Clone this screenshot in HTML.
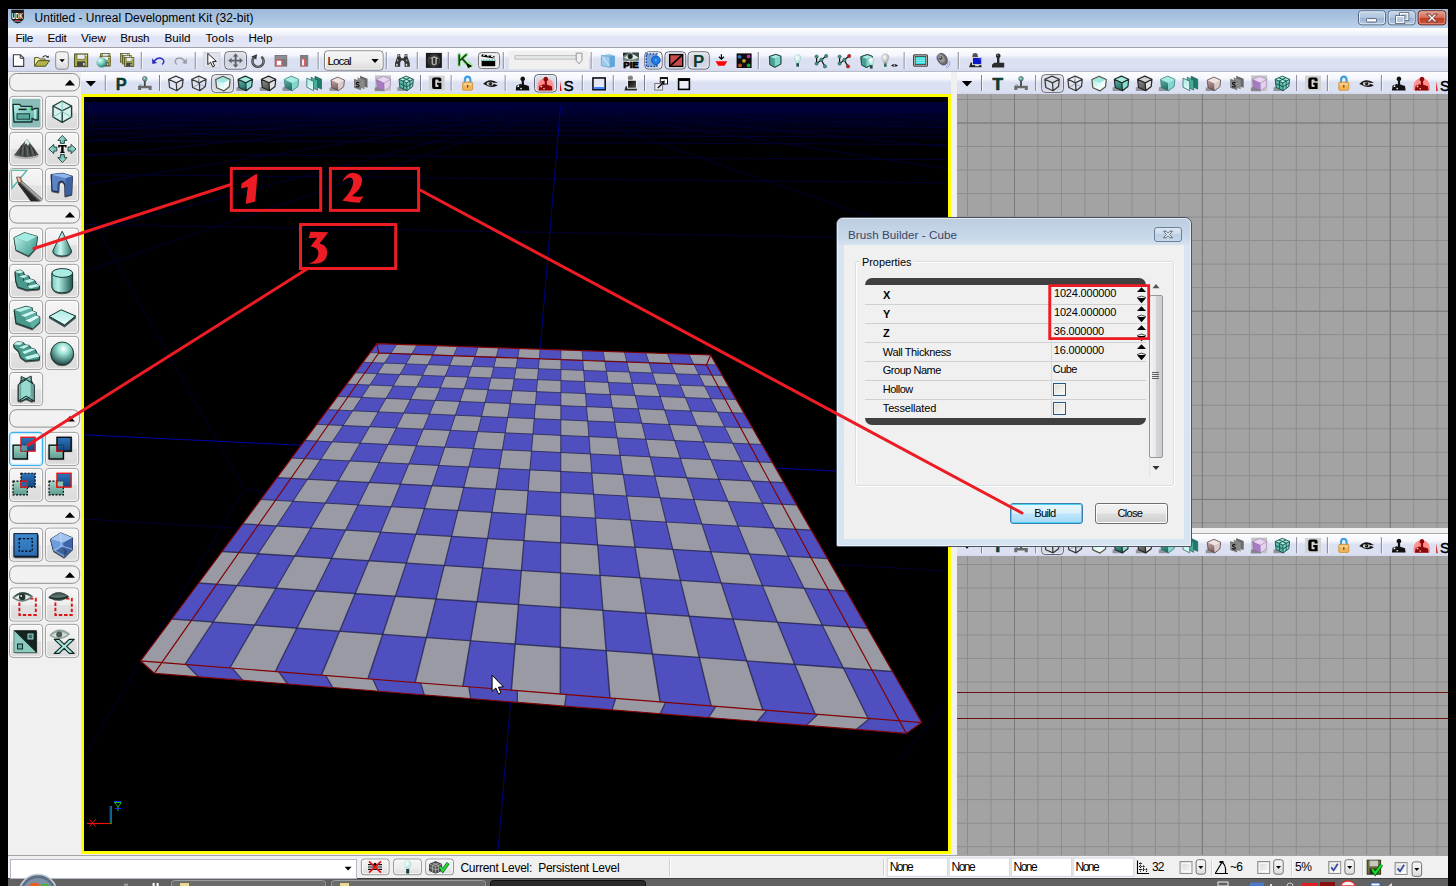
<!DOCTYPE html><html><head><meta charset="utf-8"><title>UDK</title><style>
*{box-sizing:border-box;margin:0;padding:0}
html,body{width:1456px;height:886px;overflow:hidden;background:#000}
body{position:relative;font-family:"Liberation Sans",sans-serif;font-size:12px;color:#000}
.a{position:absolute}
.t{position:absolute;white-space:nowrap;line-height:1}
.sep{position:absolute;width:1px;background:#8d8d9a;height:18px}
.tb{position:absolute;left:8px;width:1440px;background:linear-gradient(#fefeff 0%,#f4f6fc 32%,#dbe0f2 48%,#dce1f2 85%,#d4d9ee 100%)}
.lb{position:absolute;width:33px;height:33px;border:1px solid #a9a9a9;border-radius:3px;background:linear-gradient(#f6f6f6 0%,#efefef 50%,#dcdcdc 100%)}
.hd{position:absolute;left:10px;width:70px;height:17px;border:1px solid #9a9a9a;border-radius:7px;background:#f0f0f0}
.hd:after{content:"";position:absolute;right:5px;top:5px;border:5px solid transparent;border-top:0;border-bottom:6px solid #000}
.sel{position:absolute;border:1px solid #6a6a72;border-radius:3px;background:linear-gradient(#e4e6ee,#cfd2de)}
</style></head><body>
<div class="a" style="left:8px;top:9px;width:1440px;height:869px;background:#f0f0f0"></div>
<div class="a" style="left:8px;top:9px;width:1440px;height:19px;background:linear-gradient(#9db9d9 0%,#a9c3e0 45%,#bcd2ea 100%)"></div>
<div class="tb" style="top:28px;height:19px;background:linear-gradient(#ffffff 0%,#f1f3fb 30%,#dfe3f4 50%,#e3e7f6 100%)"></div>
<div class="a" style="left:8px;top:47px;width:1440px;height:1px;background:#a0a0a8"></div>
<div class="tb" style="top:48px;height:23px"></div>
<div class="a" style="left:8px;top:71px;width:1440px;height:1px;background:#b8bccb"></div>
<div class="tb" style="top:72px;height:22px"></div>
<div class="a" style="left:8px;top:72px;width:73px;height:784px;background:#f0f0f0"></div>
<div class="a" style="left:81px;top:94px;width:870px;height:760px;background:#ffff00"></div>
<div class="a" style="left:84px;top:97px;width:864px;height:754px;background:#000"></div>
<div class="a" style="left:951px;top:72px;width:6px;height:784px;background:#f0f0f0"></div>
<div class="a" style="left:957px;top:94px;width:491px;height:434px;background-color:#a3a3a3;background-image:linear-gradient(90deg,#7a7a7a 1px,transparent 1px),linear-gradient(#7a7a7a 1px,transparent 1px),linear-gradient(90deg,#8c8c8c 1px,transparent 1px),linear-gradient(#8c8c8c 1px,transparent 1px);background-size:187.92px 188.24px,187.92px 188.24px,23.49px 23.53px,23.49px 23.53px;background-position:56.98px 0,0 28.53px,10.00px 0,0 5.00px;"></div>
<div class="a" style="left:957px;top:528px;width:491px;height:6px;background:#f0f0f0;border-bottom:1px solid #a8a8a8"></div>
<div class="tb" style="left:957px;width:491px;top:534px;height:22px"></div>
<div class="a" style="left:957px;top:556px;width:491px;height:299px;background-color:#a3a3a3;background-image:linear-gradient(90deg,#7a7a7a 1px,transparent 1px),linear-gradient(#7a7a7a 1px,transparent 1px),linear-gradient(90deg,#8c8c8c 1px,transparent 1px),linear-gradient(#8c8c8c 1px,transparent 1px);background-size:187.92px 188.24px,187.92px 4000.00px,23.49px 23.53px,23.49px 23.53px;background-position:56.98px 0,0 3000.00px,10.00px 0,0 8.00px;"></div>
<div class="a" style="left:957px;top:692px;width:491px;height:1px;background:#6e1010"></div>
<div class="a" style="left:957px;top:718px;width:491px;height:1px;background:#6e1010"></div>
<div class="a" style="left:8px;top:855px;width:1440px;height:23px;background:#f0f0f0;border-top:1px solid #a5a5a5"></div>
<div class="a" style="left:8px;top:878px;width:1440px;height:8px;background:#616161;border-top:1px solid #3e3e3e"></div>
<svg class="a" style="left:0;top:0" width="1456" height="886" viewBox="0 0 1456 886">
<defs><clipPath id="vp"><rect x="84" y="97" width="864" height="754"/></clipPath><linearGradient id="hz" x1="0" y1="0" x2="0" y2="1"><stop offset="0" stop-color="#00002a"/><stop offset="0.4" stop-color="#000016"/><stop offset="1" stop-color="#000004"/></linearGradient></defs>
<g clip-path="url(#vp)"><rect x="84" y="102" width="864" height="12" fill="#000038"/><rect x="84" y="114" width="864" height="30" fill="url(#hz)"/>
<g clip-path="url(#vp)">
<path d="M84 113.0 L948 113.5" stroke="#000030" stroke-width="1"/>
<path d="M84 116.5 L948 117.5" stroke="#000030" stroke-width="1"/>
<path d="M84 120.5 L948 122.0" stroke="#000030" stroke-width="1"/>
<path d="M84 124.5 L948 126.5" stroke="#000030" stroke-width="1"/>
<path d="M84 129.0 L948 131.5" stroke="#000030" stroke-width="1"/>
<path d="M84 134.0 L948 137.2" stroke="#000030" stroke-width="1"/>
<path d="M84 140.5 L948 144.5" stroke="#000030" stroke-width="1"/>
<path d="M84 154.0 L948 159.7" stroke="#000030" stroke-width="1"/>
<path d="M84 174.5 L948 182.8" stroke="#000030" stroke-width="1"/>
<path d="M84 224.5 L948 239.2" stroke="#000030" stroke-width="1"/>
<path d="M84 519.0 L948 571.1" stroke="#000030" stroke-width="1"/>
<path d="M560 109 L84 122.0" stroke="#000030" stroke-width="1"/>
<path d="M560 109 L84 130.0" stroke="#000030" stroke-width="1"/>
<path d="M560 109 L84 141.0" stroke="#000030" stroke-width="1"/>
<path d="M560 109 L84 156.4" stroke="#000030" stroke-width="1"/>
<path d="M560 109 L84 184.6" stroke="#000030" stroke-width="1"/>
<path d="M560 109 L84 233.6" stroke="#000030" stroke-width="1"/>
<path d="M560 109 L84 272.0" stroke="#000030" stroke-width="1"/>
<path d="M560 109 L948 119.0" stroke="#000030" stroke-width="1"/>
<path d="M560 109 L948 128.0" stroke="#000030" stroke-width="1"/>
<path d="M560 109 L948 147.0" stroke="#000030" stroke-width="1"/>
<path d="M560 109 L948 169.0" stroke="#000030" stroke-width="1"/>
<path d="M560 109 L948 244.0" stroke="#000030" stroke-width="1"/>
<path d="M84 205 L244.300 488.900 L182 593 L84 757 M244.300 488.900 L290 495" stroke="#000030" stroke-width="1" fill="none"/>
<path d="M840 414 L948 560 M900 760 L948 700" stroke="#000030" stroke-width="1" fill="none"/>
<path d="M560.500 106 L498 851" stroke="#0000a0" stroke-width="1" opacity=".8"/>
<path d="M84 434.800 L836 471" stroke="#0000a8" stroke-width="1"/>
</g>
<polygon points="376.8,343.6 710.6,355.0 921.8,722.5 140.6,660.9" fill="#9a9aa5"/>
<path d="M376.8 343.6 396.8 344.3 390.8 353.4 370.1 352.6ZM417.0 345.0 437.2 345.7 432.7 354.8 411.7 354.1ZM457.6 346.4 478.0 347.1 474.9 356.3 453.7 355.6ZM498.6 347.8 519.3 348.5 517.7 357.8 496.3 357.1ZM540.1 349.2 561.0 349.9 561.0 359.4 539.3 358.6ZM582.0 350.6 603.1 351.3 604.7 360.9 582.8 360.1ZM624.4 352.1 645.8 352.8 649.0 362.5 626.8 361.7ZM667.3 353.5 688.9 354.3 693.7 364.1 671.3 363.3ZM390.8 353.4 411.7 354.1 406.0 363.9 384.4 363.1ZM432.7 354.8 453.7 355.6 449.6 365.5 427.8 364.7ZM474.9 356.3 496.3 357.1 493.8 367.1 471.6 366.3ZM517.7 357.8 539.3 358.6 538.4 368.8 516.0 367.9ZM561.0 359.4 582.8 360.1 583.6 370.4 560.9 369.6ZM604.7 360.9 626.8 361.7 629.3 372.1 606.4 371.3ZM649.0 362.5 671.3 363.3 675.6 373.8 652.4 372.9ZM693.7 364.1 716.3 364.9 722.4 375.5 698.9 374.7ZM362.9 362.3 384.4 363.1 377.4 373.6 355.1 372.8ZM406.0 363.9 427.8 364.7 422.5 375.3 399.9 374.5ZM449.6 365.5 471.6 366.3 468.1 377.1 445.2 376.2ZM493.8 367.1 516.0 367.9 514.2 378.8 491.1 378.0ZM538.4 368.8 560.9 369.6 560.9 380.6 537.5 379.7ZM583.6 370.4 606.4 371.3 608.2 382.4 584.5 381.5ZM629.3 372.1 652.4 372.9 656.1 384.3 632.1 383.3ZM675.6 373.8 698.9 374.7 704.6 386.1 680.2 385.2ZM377.4 373.6 399.9 374.5 393.2 385.9 369.9 385.0ZM422.5 375.3 445.2 376.2 440.4 387.8 416.7 386.9ZM468.1 377.1 491.1 378.0 488.1 389.7 464.2 388.8ZM514.2 378.8 537.5 379.7 536.5 391.6 512.2 390.7ZM560.9 380.6 584.5 381.5 585.5 393.6 560.9 392.6ZM608.2 382.4 632.1 383.3 635.1 395.5 610.2 394.5ZM656.1 384.3 680.2 385.2 685.3 397.5 660.1 396.5ZM704.6 386.1 729.0 387.0 736.2 399.6 710.7 398.5ZM346.7 384.1 369.9 385.0 361.7 397.4 337.5 396.4ZM393.2 385.9 416.7 386.9 410.5 399.4 386.0 398.4ZM440.4 387.8 464.2 388.8 460.0 401.4 435.2 400.4ZM488.1 389.7 512.2 390.7 510.1 403.5 485.0 402.5ZM536.5 391.6 560.9 392.6 560.9 405.6 535.4 404.6ZM585.5 393.6 610.2 394.5 612.3 407.7 586.5 406.7ZM635.1 395.5 660.1 396.5 664.5 409.9 638.3 408.8ZM685.3 397.5 710.7 398.5 717.3 412.1 690.8 411.0ZM361.7 397.4 386.0 398.4 378.2 411.9 352.8 410.8ZM410.5 399.4 435.2 400.4 429.5 414.1 403.7 413.0ZM460.0 401.4 485.0 402.5 481.5 416.4 455.4 415.3ZM510.1 403.5 535.4 404.6 534.2 418.7 507.8 417.5ZM560.9 405.6 586.5 406.7 587.7 421.0 560.8 419.8ZM612.3 407.7 638.3 408.8 641.9 423.3 614.7 422.1ZM664.5 409.9 690.8 411.0 696.9 425.7 669.3 424.5ZM717.3 412.1 744.0 413.2 752.6 428.1 724.6 426.9ZM327.6 409.7 352.8 410.8 343.1 425.5 316.7 424.3ZM378.2 411.9 403.7 413.0 396.3 427.9 369.6 426.7ZM429.5 414.1 455.4 415.3 450.4 430.4 423.3 429.2ZM481.5 416.4 507.8 417.5 505.2 432.9 477.7 431.6ZM534.2 418.7 560.8 419.8 560.8 435.4 532.9 434.1ZM587.7 421.0 614.7 422.1 617.3 437.9 588.9 436.7ZM641.9 423.3 669.3 424.5 674.5 440.5 645.8 439.2ZM696.9 425.7 724.6 426.9 732.6 443.2 703.5 441.8ZM343.1 425.5 369.6 426.7 360.2 443.0 332.4 441.7ZM396.3 427.9 423.3 429.2 416.4 445.7 388.2 444.3ZM450.4 430.4 477.7 431.6 473.5 448.4 444.9 447.0ZM505.2 432.9 532.9 434.1 531.5 451.1 502.4 449.8ZM560.8 435.4 588.9 436.7 590.3 453.9 560.8 452.5ZM617.3 437.9 645.8 439.2 650.1 456.8 620.1 455.3ZM674.5 440.5 703.5 441.8 710.8 459.6 680.3 458.2ZM732.6 443.2 762.0 444.5 772.4 462.6 741.5 461.1ZM304.8 440.4 332.4 441.7 320.6 459.5 291.6 458.0ZM360.2 443.0 388.2 444.3 379.2 462.4 349.8 460.9ZM416.4 445.7 444.9 447.0 438.8 465.4 408.9 463.9ZM473.5 448.4 502.4 449.8 499.3 468.4 468.9 466.9ZM531.5 451.1 560.8 452.5 560.7 471.5 529.9 469.9ZM590.3 453.9 620.1 455.3 623.2 474.6 591.9 473.0ZM650.1 456.8 680.3 458.2 686.7 477.8 654.8 476.2ZM710.8 459.6 741.5 461.1 751.3 481.0 718.9 479.4ZM320.6 459.5 349.8 460.9 338.2 480.9 307.5 479.2ZM379.2 462.4 408.9 463.9 400.5 484.1 369.2 482.5ZM438.8 465.4 468.9 466.9 463.8 487.5 432.0 485.8ZM499.3 468.4 529.9 469.9 528.1 490.9 495.8 489.2ZM560.7 471.5 591.9 473.0 593.6 494.3 560.7 492.6ZM623.2 474.6 654.8 476.2 660.2 497.8 626.7 496.1ZM686.7 477.8 718.9 479.4 727.9 501.4 693.9 499.6ZM751.3 481.0 784.0 482.6 796.8 505.0 762.2 503.2ZM277.0 477.6 307.5 479.2 292.9 501.2 260.8 499.5ZM338.2 480.9 369.2 482.5 358.1 504.9 325.4 503.1ZM400.5 484.1 432.0 485.8 424.4 508.6 391.1 506.7ZM463.8 487.5 495.8 489.2 491.9 512.3 458.0 510.4ZM528.1 490.9 560.7 492.6 560.7 516.2 526.1 514.2ZM593.6 494.3 626.7 496.1 630.6 520.1 595.5 518.1ZM660.2 497.8 693.9 499.6 701.9 524.0 666.1 522.0ZM727.9 501.4 762.2 503.2 774.5 528.1 738.0 526.1ZM292.9 501.2 325.4 503.1 311.0 528.0 276.6 525.9ZM358.1 504.9 391.1 506.7 380.6 532.1 345.6 530.0ZM424.4 508.6 458.0 510.4 451.6 536.3 415.9 534.2ZM491.9 512.3 526.1 514.2 523.9 540.6 487.6 538.4ZM560.7 516.2 595.5 518.1 597.6 544.9 560.6 542.7ZM630.6 520.1 666.1 522.0 672.8 549.4 635.0 547.2ZM701.9 524.0 738.0 526.1 749.4 553.9 710.9 551.6ZM774.5 528.1 811.3 530.1 827.6 558.6 788.3 556.2ZM242.6 523.9 276.6 525.9 258.1 553.8 222.0 551.5ZM311.0 528.0 345.6 530.0 331.5 558.5 294.6 556.1ZM380.6 532.1 415.9 534.2 406.3 563.2 368.7 560.8ZM451.6 536.3 487.6 538.4 482.7 568.0 444.3 565.6ZM523.9 540.6 560.6 542.7 560.6 572.9 521.4 570.4ZM597.6 544.9 635.0 547.2 640.1 577.9 600.1 575.4ZM672.8 549.4 710.9 551.6 721.2 583.1 680.4 580.5ZM749.4 553.9 788.3 556.2 804.1 588.3 762.4 585.7ZM258.1 553.8 294.6 556.1 276.1 588.2 237.1 585.6ZM331.5 558.5 368.7 560.8 355.2 593.6 315.4 590.9ZM406.3 563.2 444.3 565.6 436.0 599.0 395.3 596.3ZM482.7 568.0 521.4 570.4 518.5 604.6 477.0 601.8ZM560.6 572.9 600.1 575.4 602.9 610.3 560.5 607.4ZM640.1 577.9 680.4 580.5 689.2 616.1 645.8 613.2ZM721.2 583.1 762.4 585.7 777.4 622.1 733.0 619.1ZM804.1 588.3 846.2 590.9 867.6 628.2 822.2 625.1ZM198.6 583.0 237.1 585.6 213.0 622.1 171.8 619.0ZM276.1 588.2 315.4 590.9 296.9 628.2 254.7 625.1ZM355.2 593.6 395.3 596.3 382.7 634.4 339.5 631.3ZM436.0 599.0 477.0 601.8 470.5 640.8 426.3 637.6ZM518.5 604.6 560.5 607.4 560.4 647.3 515.2 644.0ZM602.9 610.3 645.8 613.2 652.5 654.0 606.2 650.7ZM689.2 616.1 733.0 619.1 746.7 660.9 699.3 657.5ZM777.4 622.1 822.2 625.1 843.3 667.9 794.7 664.4ZM213.0 622.1 254.7 625.1 229.9 667.9 185.0 664.4ZM296.9 628.2 339.5 631.3 321.4 675.2 275.3 671.5ZM382.7 634.4 426.3 637.6 415.1 682.5 367.9 678.8ZM470.5 640.8 515.2 644.0 511.3 690.1 462.9 686.3ZM560.4 647.3 606.2 650.7 610.0 697.9 560.3 694.0ZM652.5 654.0 699.3 657.5 711.2 705.9 660.2 701.9ZM746.7 660.9 794.7 664.4 815.1 714.1 762.8 710.0ZM843.3 667.9 892.5 671.5 921.8 722.5 868.1 718.3Z" fill="#4f4fbf"/>
<path d="M396.43 344.28 L397.22 344.28 L185.74 664.40 L184.19 664.40ZM416.57 344.97 L417.36 344.97 L230.64 667.94 L229.09 667.94ZM436.81 345.66 L437.60 345.66 L276.10 671.52 L274.55 671.52ZM457.17 346.36 L457.95 346.36 L322.13 675.15 L320.58 675.15ZM477.63 347.06 L478.42 347.06 L368.72 678.83 L367.17 678.83ZM498.20 347.76 L498.99 347.76 L415.91 682.55 L414.36 682.55ZM518.88 348.47 L519.67 348.47 L463.69 686.32 L462.14 686.32ZM539.68 349.18 L540.47 349.18 L512.08 690.13 L510.53 690.13ZM560.59 349.89 L561.38 349.89 L561.09 694.00 L559.54 694.00ZM581.61 350.61 L582.40 350.61 L610.73 697.91 L609.18 697.91ZM602.75 351.33 L603.54 351.33 L661.02 701.88 L659.47 701.88ZM624.01 352.06 L624.79 352.06 L711.97 705.89 L710.42 705.89ZM645.38 352.79 L646.17 352.79 L763.58 709.96 L762.03 709.96ZM666.87 353.52 L667.66 353.52 L815.88 714.09 L814.33 714.09ZM688.48 354.26 L689.27 354.26 L868.87 718.27 L867.32 718.27Z" fill="#25254f" opacity="0.8"/>
<path d="M370.1 352.6 L716.3 364.9" stroke="#25254f" stroke-width="0.81" opacity="0.8"/>
<path d="M362.9 362.3 L722.4 375.5" stroke="#25254f" stroke-width="0.84" opacity="0.8"/>
<path d="M355.1 372.8 L729.0 387.0" stroke="#25254f" stroke-width="0.86" opacity="0.8"/>
<path d="M346.7 384.1 L736.2 399.6" stroke="#25254f" stroke-width="0.89" opacity="0.8"/>
<path d="M337.5 396.4 L744.0 413.2" stroke="#25254f" stroke-width="0.92" opacity="0.8"/>
<path d="M327.6 409.7 L752.6 428.1" stroke="#25254f" stroke-width="0.96" opacity="0.8"/>
<path d="M316.7 424.3 L762.0 444.5" stroke="#25254f" stroke-width="0.99" opacity="0.8"/>
<path d="M304.8 440.4 L772.4 462.6" stroke="#25254f" stroke-width="1.03" opacity="0.8"/>
<path d="M291.6 458.0 L784.0 482.6" stroke="#25254f" stroke-width="1.07" opacity="0.8"/>
<path d="M277.0 477.6 L796.8 505.0" stroke="#25254f" stroke-width="1.12" opacity="0.8"/>
<path d="M260.8 499.5 L811.3 530.1" stroke="#25254f" stroke-width="1.17" opacity="0.8"/>
<path d="M242.6 523.9 L827.6 558.6" stroke="#25254f" stroke-width="1.23" opacity="0.8"/>
<path d="M222.0 551.5 L846.2 590.9" stroke="#25254f" stroke-width="1.30" opacity="0.8"/>
<path d="M198.6 583.0 L867.6 628.2" stroke="#25254f" stroke-width="1.37" opacity="0.8"/>
<path d="M171.8 619.0 L892.5 671.5" stroke="#25254f" stroke-width="1.45" opacity="0.8"/>
<polygon points="140.6,660.9 921.8,722.5 906.3,733.4 154.3,673.3" fill="#9a9aa5"/>
<path d="M186.3 664.5 232.3 668.1 242.8 680.4 198.4 676.8ZM278.8 671.8 325.7 675.5 332.8 687.6 287.6 684.0ZM372.9 679.2 420.6 683.0 424.3 694.9 378.4 691.2ZM468.8 686.8 517.3 690.6 517.4 702.3 470.7 698.6ZM566.3 694.5 615.7 698.4 612.1 709.9 564.6 706.1ZM665.6 702.3 715.9 706.3 708.5 717.6 660.1 713.7ZM766.7 710.3 817.9 714.3 806.5 725.4 757.3 721.5ZM869.6 718.4 921.8 722.5 906.3 733.4 856.2 729.4Z" fill="#4d4dbb"/>
<path d="M186.3 664.5 L198.4 676.8M232.3 668.1 L242.8 680.4M278.8 671.8 L287.6 684.0M325.7 675.5 L332.8 687.6M372.9 679.2 L378.4 691.2M420.6 683.0 L424.3 694.9M468.8 686.8 L470.7 698.6M517.3 690.6 L517.4 702.3M566.3 694.5 L564.6 706.1M615.7 698.4 L612.1 709.9M665.6 702.3 L660.1 713.7M715.9 706.3 L708.5 717.6M766.7 710.3 L757.3 721.5M817.9 714.3 L806.5 725.4M869.6 718.4 L856.2 729.4" stroke="#25254f" stroke-width="1.3" fill="none" opacity="0.8"/>
<path d="M376.8 343.6 L710.6 355.0 L921.8 722.5 L140.6 660.9ZM378.7 353.0 L706.5 365.0 L906.3 733.4 L154.3 673.3ZM376.8 343.6 L378.7 353.0M710.6 355.0 L706.5 365.0M921.8 722.5 L906.3 733.4M140.6 660.9 L154.3 673.3" stroke="#800000" stroke-width="1.15" fill="none"/>
</g></svg>
<svg class="a" style="left:0;top:0" width="1456" height="886" viewBox="0 0 1456 886"><g transform="translate(-1.1 -.5) scale(.97 .96)" transform-origin="12 10"><path d="M12.400 10.200 H25.400 V20 L23 22.400 H14.800 L12.400 20Z" fill="#1a1a1a"/><path d="M14.600 23 H23.200 L18.900 24.600Z" fill="#1a1a1a"/><rect x="16" y="21" width="5" height="1" fill="#e03030"/>
<text x="13" y="19.400" font-family="Liberation Sans" font-weight="bold" font-size="8.600" fill="#fff" textLength="11.600" lengthAdjust="spacingAndGlyphs">UDK</text></g>
<defs><linearGradient id="wbb" x1="0" y1="0" x2="0" y2="1"><stop offset="0" stop-color="#c4d6ea"/><stop offset=".48" stop-color="#b0c6e0"/><stop offset=".52" stop-color="#98b4d4"/><stop offset="1" stop-color="#b4cce6"/></linearGradient><linearGradient id="wbr" x1="0" y1="0" x2="0" y2="1"><stop offset="0" stop-color="#e4a494"/><stop offset=".48" stop-color="#d46c58"/><stop offset=".52" stop-color="#c03c24"/><stop offset="1" stop-color="#d0583c"/></linearGradient></defs>
<rect x="1358.5" y="10.800" width="27.0" height="14" rx="3" fill="url(#wbb)" stroke="#56657e" stroke-width="1"/><rect x="1359.5" y="11.800" width="25.0" height="12" rx="2" fill="none" stroke="#fff" stroke-width="1" opacity=".6"/>
<rect x="1388.2" y="10.800" width="27.0" height="14" rx="3" fill="url(#wbb)" stroke="#56657e" stroke-width="1"/><rect x="1389.2" y="11.800" width="25.0" height="12" rx="2" fill="none" stroke="#fff" stroke-width="1" opacity=".6"/>
<rect x="1418.2" y="10.800" width="27.6" height="14" rx="3" fill="url(#wbr)" stroke="#5a1a14" stroke-width="1"/><rect x="1419.2" y="11.800" width="25.6" height="12" rx="2" fill="none" stroke="#f4b4a4" stroke-width="1" opacity=".7"/>
<rect x="1366.500" y="18.600" width="10" height="3.400" rx=".8" fill="#fff" stroke="#4a566c" stroke-width=".9"/>
<rect x="1400.500" y="13.600" width="7.400" height="6" fill="none" stroke="#4a566c" stroke-width="2.600"/><rect x="1400.500" y="13.600" width="7.400" height="6" fill="#b4c8e0" stroke="#fff" stroke-width="1.100"/><rect x="1396.500" y="16.600" width="7.400" height="6" fill="none" stroke="#4a566c" stroke-width="2.600"/><rect x="1396.500" y="16.600" width="7.400" height="6" fill="#b4c8e0" stroke="#fff" stroke-width="1.100"/>
<path d="M1426.600 14 L1429.600 14 L1432 16.600 L1434.400 14 L1437.400 14 L1433.600 18 L1437.400 22 L1434.400 22 L1432 19.400 L1429.600 22 L1426.600 22 L1430.400 18Z" fill="#fff" stroke="#5a2a24" stroke-width=".9" stroke-linejoin="round"/></svg>
<svg class="a" style="left:0;top:0" width="1456" height="886" viewBox="0 0 1456 886">
<g transform="translate(12.80 54.20)" ><path d="M.6 .6 H7.6 L10.9 3.9 V12.2 H.6Z" fill="#fff" stroke="#3a3a3a" stroke-width="1.1"/><path d="M7.4 .8 V4.1 H10.7" fill="none" stroke="#3a3a3a" stroke-width="1"/></g>
<g transform="translate(34.00 54.60)" ><path d="M.6 11.6 V3 H4.6 L5.8 4.4 H11 V6" fill="#f4f4b0" stroke="#55551e" stroke-width="1"/><path d="M.6 11.6 L4.2 6 H15.6 L11.6 11.6Z" fill="#b2b250" stroke="#55551e" stroke-width="1"/><path d="M8.4 2.6 Q11.2 -.4 13.8 2.2" fill="none" stroke="#222" stroke-width="1"/><path d="M12.3 2.6 L14.6 3.4 L14.8 .8Z" fill="#222"/></g>
<g transform="translate(55.20 51.30)" ><rect x=".5" y=".5" width="12.6" height="17.4" rx="2.6" fill="url(#lbt)" stroke="#8a8a8a"/><path d="M4.2 8 h5.4 l-2.7 3Z" fill="#000"/></g>
<g transform="translate(74.00 53.40)" ><rect x=".6" y=".6" width="13" height="12.6" fill="#b2b250" stroke="#55551e" stroke-width="1.1"/><rect x="3" y=".8" width="8" height="5" fill="#e9ecf6" stroke="#55551e" stroke-width=".6"/><rect x="3" y="8" width="8.4" height="5" fill="#444"/><rect x="9" y="9.6" width="1.6" height="2.4" fill="#ddd"/><rect x="11.6" y="1.4" width="1.2" height="1.2" fill="#fff"/></g>
<g transform="translate(100.20 53.20) scale(0.72)"><g transform="translate(0.00 0.00)" ><rect x=".6" y=".6" width="13" height="12.6" fill="#b2b250" stroke="#55551e" stroke-width="1.1"/><rect x="3" y=".8" width="8" height="5" fill="#e9ecf6" stroke="#55551e" stroke-width=".6"/><rect x="3" y="8" width="8.4" height="5" fill="#444"/><rect x="9" y="9.6" width="1.6" height="2.4" fill="#ddd"/><rect x="11.6" y="1.4" width="1.2" height="1.2" fill="#fff"/></g></g>

<g transform="translate(99.60 55.80) scale(0.78)"><g transform="translate(0.00 0.00)" ><rect x=".6" y=".6" width="13" height="12.6" fill="#b2b250" stroke="#55551e" stroke-width="1.1"/><rect x="3" y=".8" width="8" height="5" fill="#e9ecf6" stroke="#55551e" stroke-width=".6"/><rect x="3" y="8" width="8.4" height="5" fill="#444"/><rect x="9" y="9.6" width="1.6" height="2.4" fill="#ddd"/><rect x="11.6" y="1.4" width="1.2" height="1.2" fill="#fff"/></g></g>
<circle cx="101.6" cy="62.4" r="5.2" fill="url(#sph)"/>
<g transform="translate(120.00 53.20) scale(0.68)"><g transform="translate(0.00 0.00)" ><rect x=".6" y=".6" width="13" height="12.6" fill="#b2b250" stroke="#55551e" stroke-width="1.1"/><rect x="3" y=".8" width="8" height="5" fill="#e9ecf6" stroke="#55551e" stroke-width=".6"/><rect x="3" y="8" width="8.4" height="5" fill="#444"/><rect x="9" y="9.6" width="1.6" height="2.4" fill="#ddd"/><rect x="11.6" y="1.4" width="1.2" height="1.2" fill="#fff"/></g></g>
<g transform="translate(122.00 55.00) scale(0.68)"><g transform="translate(0.00 0.00)" ><rect x=".6" y=".6" width="13" height="12.6" fill="#b2b250" stroke="#55551e" stroke-width="1.1"/><rect x="3" y=".8" width="8" height="5" fill="#e9ecf6" stroke="#55551e" stroke-width=".6"/><rect x="3" y="8" width="8.4" height="5" fill="#444"/><rect x="9" y="9.6" width="1.6" height="2.4" fill="#ddd"/><rect x="11.6" y="1.4" width="1.2" height="1.2" fill="#fff"/></g></g>
<g transform="translate(124.00 57.00) scale(0.72)"><g transform="translate(0.00 0.00)" ><rect x=".6" y=".6" width="13" height="12.6" fill="#b2b250" stroke="#55551e" stroke-width="1.1"/><rect x="3" y=".8" width="8" height="5" fill="#e9ecf6" stroke="#55551e" stroke-width=".6"/><rect x="3" y="8" width="8.4" height="5" fill="#444"/><rect x="9" y="9.6" width="1.6" height="2.4" fill="#ddd"/><rect x="11.6" y="1.4" width="1.2" height="1.2" fill="#fff"/></g></g>
<path d="M141.3 52.0 v17" stroke="#7d7d8c" stroke-width="1"/><path d="M142.3 52.0 v17" stroke="#fff" stroke-width="1" opacity=".7"/>
<g transform="translate(151.60 56.40)" ><path d="M2.6 4.6 Q6.6 0 10.6 2.4 Q13.8 5 10.6 8" fill="none" stroke="#2828c0" stroke-width="1.4"/><path d="M.4 2.2 L5.4 6.6 L.8 7.6Z" fill="#2828c0"/></g>
<g transform="translate(187.40 56.40) scale(-1 1)"><g transform="translate(0.00 0.00)" ><path d="M2.6 4.6 Q6.6 0 10.6 2.4 Q13.8 5 10.6 8" fill="none" stroke="#9c9ca4" stroke-width="1.4"/><path d="M.4 2.2 L5.4 6.6 L.8 7.6Z" fill="#9c9ca4"/></g></g>
<path d="M195.3 52.0 v17" stroke="#7d7d8c" stroke-width="1"/><path d="M196.3 52.0 v17" stroke="#fff" stroke-width="1" opacity=".7"/>
<g transform="translate(204.40 52.80)" ><rect x="-.5" y="-.5" width="16" height="15.6" fill="#e0e3ec" stroke="#c8c4c0" stroke-width=".6"/><path d="M3.4 .6 V11.8 L6.2 9.4 L8.2 14 L10.2 13.2 L8.2 8.8 L12 8.6Z" fill="#fff" stroke="#222" stroke-width="1"/></g>
<rect x="224.8" y="51.7" width="21.6" height="17.4" rx="3.5" fill="url(#selD)" stroke="#5e6270" stroke-width="1"/><rect x="225.8" y="52.7" width="19.6" height="15.4" rx="2.5" fill="none" stroke="#fff" stroke-width="1" opacity=".55"/>
<g transform="translate(228.60 53.60)" ><path d="M7 0 L9.4 2.8 H7.7 V6.3 H11.2 V4.6 L14 7 L11.2 9.4 V7.7 H7.7 V11.2 H9.4 L7 14 L4.6 11.2 H6.3 V7.7 H2.8 V9.4 L0 7 L2.8 4.6 V6.3 H6.3 V2.8 H4.6Z" fill="#5c6068" stroke="#4a4e56" stroke-width=".3"/></g>
<g transform="translate(250.80 54.00)" ><path d="M4.2 2.6 A5.6 5.6 0 1 0 10.6 2.8" fill="none" stroke="#3c3c40" stroke-width="2.4"/><path d="M4.2 2.6 A5.6 5.6 0 1 0 10.6 2.8" fill="none" stroke="#9a9aa0" stroke-width=".7"/><path d="M.4 2.4 L6.4 .2 L5.4 5.6Z" fill="#3c3c40"/></g>
<g transform="translate(274.60 55.00)" ><rect x="0" y="0" width="12.6" height="11.6" fill="#77777d"/><rect x="1" y="1" width="11" height="3" fill="#8e8e95"/><rect x="1.6" y="5.2" width="5.6" height="5.6" fill="#fff" stroke="#e25c5c" stroke-width="1.1"/></g>
<g transform="translate(300.00 55.00)" ><rect x="0" y="0" width="8.2" height="11.6" fill="#7d7d83"/><rect x="1.6" y="4" width="2.8" height="7" fill="#fff" stroke="#e25c5c" stroke-width="1.1"/></g>
<path d="M318.2 52.0 v17" stroke="#7d7d8c" stroke-width="1"/><path d="M319.2 52.0 v17" stroke="#fff" stroke-width="1" opacity=".7"/>
<g transform="translate(324.00 50.40)" ><rect x=".5" y=".5" width="58.5" height="19.2" rx="3" fill="url(#lbt)" stroke="#7a7a7a"/><rect x="1.5" y="1.5" width="56.5" height="17.2" rx="2" fill="none" stroke="#fff" opacity=".8"/><text x="3.6" y="14.2" font-family="Liberation Sans" font-weight="normal" font-size="11.8" fill="#000" textLength="24" lengthAdjust="spacing">Local</text><path d="M47.3 8.6 h7.4 l-3.7 4Z" fill="#000"/></g>
<path d="M386.3 52.0 v17" stroke="#7d7d8c" stroke-width="1"/><path d="M387.3 52.0 v17" stroke="#fff" stroke-width="1" opacity=".7"/>
<g transform="translate(395.00 54.20)" ><path d="M2.4 0 H5.2 V2 L6.4 4 H8.4 L9.6 2 V0 H12.4 V2.4 L14.8 9 V12.6 H9.6 V8.4 L8.4 6.4 H6.4 L5.2 8.4 V12.6 H0 V9 L2.4 2.4Z" fill="#333"/><rect x="3.2" y=".8" width="1.2" height="1.4" fill="#ddd"/><rect x="10.4" y=".8" width="1.2" height="1.4" fill="#ddd"/><rect x="1.2" y="9.6" width="1.4" height="2" fill="#eee"/><rect x="10.8" y="9.6" width="1.4" height="2" fill="#eee"/><rect x="2" y="5.4" width="1.2" height="1.6" fill="#bbb"/><rect x="11" y="5.4" width="1.2" height="1.6" fill="#bbb"/></g>
<path d="M417.3 52.0 v17" stroke="#7d7d8c" stroke-width="1"/><path d="M418.3 52.0 v17" stroke="#fff" stroke-width="1" opacity=".7"/>
<g transform="translate(425.90 52.90)" ><rect x="0" y="0" width="16" height="15" fill="#1c1c1c"/><circle cx="8" cy="7.6" r="5.8" fill="#2c2c2c" stroke="#555" stroke-width=".8"/><path d="M3.4 6 Q8 1 12.8 5.6 L11 6 V9.6 Q11 12.4 8 12.4 Q5.6 12.4 5.6 9.6 V5.4Z M7.2 5 V10 Q7.2 11 8.2 11 Q9.4 11 9.4 10 V5Z" fill="#a8a8a8" fill-rule="evenodd"/></g>
<path d="M448.3 52.0 v17" stroke="#7d7d8c" stroke-width="1"/><path d="M449.3 52.0 v17" stroke="#fff" stroke-width="1" opacity=".7"/>
<g transform="translate(457.60 53.60)" ><path d="M1.6 .8 V12 M9 .8 L2 7 M4.6 5 L11 12 H13.6 M13.6 12 L11.4 9.6 M13.6 12 L11 13.4" fill="none" stroke="#a6e6a0" stroke-width="3.6" stroke-linecap="round"/><path d="M1.6 .8 V12 M9 .8 L2 7 M4.6 5 L11 12" fill="none" stroke="#0e4a12" stroke-width="1.7"/><path d="M9.6 10.4 L13.8 12.4 L10.6 14Z M10 11.4 L13 12.4" fill="#000" stroke="#000" stroke-width=".8"/></g>
<g transform="translate(478.00 52.00)" ><rect x=".5" y=".5" width="21" height="16" rx="3" fill="#ececee" stroke="#7a7a7a"/><rect x="3.6" y="7.4" width="13.6" height="6.8" fill="#000"/><rect x="3.6" y="7.4" width="13.6" height="1.4" fill="#9fe"/><path d="M3.6 7.4 h13.6" stroke="#fff" stroke-width="1" stroke-dasharray="1.6 1.2"/><path d="M3.8 2.2 L16.6 4.2 L16.2 6.6 L3.4 4.6Z" fill="#000"/><path d="M5 3 l2 .3 M9 3.6 l2 .3 M13 4.3 l2 .3" stroke="#fff" stroke-width="1"/><circle cx="15.4" cy="5.4" r=".7" fill="#7df"/></g>
<path d="M503.3 52.0 v17" stroke="#7d7d8c" stroke-width="1"/><path d="M504.3 52.0 v17" stroke="#fff" stroke-width="1" opacity=".7"/>
<g transform="translate(508.80 50.80)" ><rect x="0" y="0" width="80" height="18.6" fill="#f0f0f0"/><rect x="6.2" y="4.9" width="61.6" height="3.4" fill="#e7eaea" stroke="#b0b0b0" stroke-width=".8"/><path d="M67.4 2.4 H73.2 V9.6 L70.3 13 L67.4 9.6Z" fill="#f1f1f1" stroke="#8c8c8c" stroke-width=".9" stroke-linejoin="round"/></g>
<path d="M591.2 52.0 v17" stroke="#7d7d8c" stroke-width="1"/><path d="M592.2 52.0 v17" stroke="#fff" stroke-width="1" opacity=".7"/>
<g transform="translate(600.40 53.80)" ><polygon points="1,1.6 9,.2 14.4,2 14.4,12.6 9.6,13.6 1,12" fill="#7fb9e2" opacity=".85"/><polygon points="1,1.6 9.4,2.8 9.6,13.6 1,12" fill="#9ecbec" stroke="#5a9fd0" stroke-width=".6"/><polygon points="9.4,2.8 14.4,2 14.4,12.6 9.6,13.6" fill="#5fa6da"/><path d="M2 3 L8.6 11.6" stroke="#c9e4f6" stroke-width="1.2"/></g>
<g transform="translate(623.00 52.80)" ><rect x="0" y="0" width="16" height="8" fill="#70827c"/><path d="M1 5 Q8 -1.6 15.6 4.6 Q8 8.8 1 5Z" fill="#dfe7e3"/><circle cx="7.2" cy="3.8" r="2.5" fill="#1c2622"/><path d="M0 3.4 Q8 -3 16 2.6 V0 H0Z" fill="#26302c"/><path d="M9 0 L16 5 V0Z" fill="#3e4c47"/><rect x="0" y="8" width="16" height="7.2" fill="#fff" opacity="0"/><text x="0.2" y="15.2" font-family="Liberation Sans" font-weight="bold" font-size="9.6" fill="#000" stroke="#000" stroke-width=".7" textLength="15.6" lengthAdjust="spacingAndGlyphs">PIE</text></g>
<rect x="644.8" y="51.8" width="17.3" height="17.2" rx="3.5" fill="url(#selL)" stroke="#5e6270" stroke-width="1"/><rect x="645.8" y="52.8" width="15.3" height="15.2" rx="2.5" fill="none" stroke="#fff" stroke-width="1" opacity=".55"/>
<g transform="translate(644.30 51.30)" ><rect x="2" y="2.6" width="10.6" height="12.6" fill="#7da3cf"/><rect x="2" y="2.6" width="10.6" height="12.6" fill="none" stroke="#0c3fb0" stroke-width="1.3" stroke-dasharray="1.8 1.3"/><circle cx="11.6" cy="9" r="4.3" fill="#1f7de8" stroke="#0a4fc0" stroke-width="1"/><ellipse cx="11.6" cy="9" rx="1.2" ry="1.8" fill="#7db8f4" stroke="#0a4fc0" stroke-width=".5"/></g>
<rect x="665.0" y="51.8" width="20.7" height="17.2" rx="3.5" fill="url(#selD)" stroke="#5e6270" stroke-width="1"/><rect x="666.0" y="52.8" width="18.7" height="15.2" rx="2.5" fill="none" stroke="#fff" stroke-width="1" opacity=".55"/>
<g transform="translate(669.00 53.90)" ><rect x=".7" y=".7" width="13" height="11.8" fill="#c94a4a" stroke="#000" stroke-width="1.4"/><path d="M1 12.2 L13.4 1" stroke="#000" stroke-width="1.5"/></g>
<rect x="688.1" y="51.8" width="21.1" height="17.2" rx="3.5" fill="url(#selD)" stroke="#5e6270" stroke-width="1"/><rect x="689.1" y="52.8" width="19.1" height="15.2" rx="2.5" fill="none" stroke="#fff" stroke-width="1" opacity=".55"/>
<text x="692.9" y="66.7" font-family="Liberation Sans" font-weight="bold" font-size="16.8" fill="#0b3b2e" >P</text>
<g transform="translate(715.50 54.20)" ><path d="M5.9 0 V4.4 M3.4 2.6 L5.9 5 L8.4 2.6" fill="none" stroke="#000" stroke-width="1.2"/><path d="M3.6 3.6 H8.2" stroke="#000" stroke-width="0"/><path d="M0 7 H11.8 L9 11.6 H2.8Z" fill="#f00"/></g>
<g transform="translate(736.60 53.40)" ><rect x="0" y="0" width="15" height="14.6" fill="#0c0c0c"/><circle cx="3" cy="3.4" r="1.9" fill="#3a78d0" opacity=".9"/><circle cx="12" cy="3" r="1.9" fill="#c040b0" opacity=".9"/><circle cx="7.4" cy="7.4" r="1.9" fill="#d8b020" opacity=".9"/><circle cx="3.4" cy="12" r="1.9" fill="#d05030" opacity=".9"/><circle cx="12" cy="12" r="1.9" fill="#20b050" opacity=".9"/></g>
<path d="M758.3 52.0 v17" stroke="#7d7d8c" stroke-width="1"/><path d="M759.3 52.0 v17" stroke="#fff" stroke-width="1" opacity=".7"/>
<g transform="translate(768.40 54.00)" ><path d="M1 2.6 L7.4 .4 L12.4 2.2 L12.4 10 L6.4 13.2 L1.6 10.6Z" fill="#58b3a6" stroke="#2a4e48" stroke-width="1.1" stroke-linejoin="round"/><path d="M1 2.6 L7.4 .4 L12.4 2.2 L6.2 4.6Z" fill="#a9efe6"/><path d="M6.2 4.6 L12.4 2.2 L12.4 10 L6.4 13.2Z" fill="#7fd6cb"/><path d="M1 2.6 L6.2 4.6 L6.4 13.2 L1.6 10.6Z" fill="#4aa094"/><path d="M1 2.6 L7.4 .4 L12.4 2.2 L12.4 10 L6.4 13.2 L1.6 10.6Z" fill="none" stroke="#2a4e48" stroke-width="1" stroke-linejoin="round"/></g>
<g transform="translate(794.40 54.20)" ><path d="M0.2 4.5 a3.3 3.3 0 1 1 6.3 0 L4.6 9.2 h-2.6Z" fill="url(#bulb)" stroke="#9ab" stroke-width=".3"/><rect x="2" y="9.0" width="2.6" height="3.4" fill="#1c4a42"/></g>
<g transform="translate(814.60 55.00)" ><path d="M2 1.6 V8.6 L11.6 1 M6.6 5 L10.4 11.4" fill="none" stroke="#111" stroke-width="1.2"/><circle cx="2" cy="1.6" r="1.7" fill="#3f9184" stroke="#1c3c36" stroke-width=".4"/><circle cx="2" cy="8.6" r="1.7" fill="#3f9184" stroke="#1c3c36" stroke-width=".4"/><circle cx="6.8" cy="4.8" r="1.7" fill="#3f9184" stroke="#1c3c36" stroke-width=".4"/><circle cx="11.6" cy="1" r="1.7" fill="#3f9184" stroke="#1c3c36" stroke-width=".4"/><circle cx="10.4" cy="11.4" r="1.7" fill="#3f9184" stroke="#1c3c36" stroke-width=".4"/></g>
<g transform="translate(837.60 55.00)" ><path d="M2 1.6 V8.6 L11.6 1 M6.6 5 L10.4 11.4" fill="none" stroke="#111" stroke-width="1.2"/><circle cx="2" cy="1.6" r="1.7" fill="#3f9184" stroke="#1c3c36" stroke-width=".4"/><circle cx="2" cy="8.6" r="1.7" fill="#3f9184" stroke="#1c3c36" stroke-width=".4"/><circle cx="6.8" cy="4.8" r="1.7" fill="#3f9184" stroke="#1c3c36" stroke-width=".4"/><circle cx="11.6" cy="1" r="1.7" fill="#e01010" stroke="#1c3c36" stroke-width=".4"/><circle cx="10.4" cy="11.4" r="1.7" fill="#e01010" stroke="#1c3c36" stroke-width=".4"/></g>
<g transform="translate(860.00 54.20)" ><path d="M1 2.6 L7.4 .4 L12.4 2.2 L12.4 10 L6.4 13.2 L1.6 10.6Z" fill="#58b3a6" stroke="#2a4e48" stroke-width="1.1" stroke-linejoin="round"/><path d="M1 2.6 L7.4 .4 L12.4 2.2 L6.2 4.6Z" fill="#a9efe6"/><path d="M6.2 4.6 L12.4 2.2 L12.4 10 L6.4 13.2Z" fill="#7fd6cb"/><path d="M1 2.6 L6.2 4.6 L6.4 13.2 L1.6 10.6Z" fill="#4aa094"/><path d="M1 2.6 L7.4 .4 L12.4 2.2 L12.4 10 L6.4 13.2 L1.6 10.6Z" fill="none" stroke="#2a4e48" stroke-width="1" stroke-linejoin="round"/></g>
<g transform="translate(868.00 57.00)" ><path d="M0.5 4.1 a2.9 2.9 0 1 1 5.5 0 L4.6 8.4 h-2.6Z" fill="url(#bulb)" stroke="#9ab" stroke-width=".3"/><rect x="2" y="8.2" width="2.6" height="3.4" fill="#1c4a42"/></g>
<g transform="translate(882.00 53.60)" ><path d="M-0.2 4.9 a3.7 3.7 0 1 1 7.0 0 L4.6 10.0 h-2.6Z" fill="url(#bulbw)" stroke="#9ab" stroke-width=".3"/><rect x="2" y="9.8" width="2.6" height="3.4" fill="#2a6a5a"/></g>
<path d="M891 65.4 q3.4 -3 7 0 q-3.4 2.4 -7 0Z" fill="#111"/><circle cx="894.4" cy="65.2" r=".9" fill="#bbb"/>
<path d="M904.2 52.0 v17" stroke="#7d7d8c" stroke-width="1"/><path d="M905.2 52.0 v17" stroke="#fff" stroke-width="1" opacity=".7"/>
<g transform="translate(913.00 54.20)" ><rect x=".6" y=".6" width="13.8" height="11.4" rx="1" fill="#e8e8e8" stroke="#444" stroke-width="1.2"/><rect x="2.6" y="2.6" width="9.8" height="7.4" fill="#30e0e0"/><path d="M2.6 4.6 h9.8 M2.6 6.4 h9.8 M2.6 8.2 h9.8" stroke="#fff" stroke-width=".8" stroke-dasharray="1 1"/><rect x="2.2" y="2.2" width="10.6" height="8.2" fill="none" stroke="#333" stroke-width=".8"/></g>
<g transform="translate(936.00 52.80)" ><path d="M11 9 Q13.4 11.6 9.6 14.4 M12.8 8 Q16 11.6 10.6 15.4" fill="none" stroke="#8a8ae8" stroke-width=".8"/><path d="M1.6 2 Q-.6 4.6 1.4 7.6" fill="none" stroke="#8a8ae8" stroke-width=".8"/><ellipse cx="6.4" cy="6.4" rx="4.6" ry="6.2" transform="rotate(-28 6.4 6.4)" fill="#6a6a6a" stroke="#444" stroke-width=".6"/><ellipse cx="5.4" cy="5.6" rx="3" ry="4.4" transform="rotate(-28 5.4 5.6)" fill="#9a9a9a"/><circle cx="4.6" cy="5" r="1.9" fill="#4a4a4a"/><circle cx="4.1" cy="4.4" r=".7" fill="#ddd"/></g>
<path d="M958.3 52.0 v17" stroke="#7d7d8c" stroke-width="1"/><path d="M959.3 52.0 v17" stroke="#fff" stroke-width="1" opacity=".7"/>
<g transform="translate(968.70 53.00)" ><ellipse cx="6.4" cy="2" rx="2.6" ry="2" fill="#555"/><path d="M.4 14.2 L2 9.6 H12 L13 14.2Z" fill="#222"/><rect x="3.6" y="2.6" width="5.6" height="4" fill="#444"/><rect x="3.8" y="4.4" width="9.2" height="7.2" fill="#0a18c8" stroke="#d8d8d8" stroke-width="1"/><path d="M4.4 5 H9 L12.4 8 V5Z" fill="#3050ff" opacity=".6"/><rect x="6.4" y="12" width="4" height="1.2" fill="#ddd"/></g>
<g transform="translate(991.80 53.40)" ><path d="M4 2.4 Q4 0 6.4 0 Q8.8 0 8.8 2.4 Q8.8 4 7.6 4.6 V9.4 H12.4 V14 H.2 V11.4 L2.4 9.4 H5.2 V4.6 Q4 4 4 2.4Z" fill="#2a2a2a"/><circle cx="5.8" cy="1.8" r=".8" fill="#888"/></g>
</svg>
<svg class="a" style="left:0;top:0" width="1456" height="886" viewBox="0 0 1456 886">
<defs>
<linearGradient id="selD" x1="0" y1="0" x2="0" y2="1"><stop offset="0" stop-color="#e2e4ec"/><stop offset=".5" stop-color="#d0d3df"/><stop offset="1" stop-color="#d6d9e6"/></linearGradient>
<linearGradient id="selL" x1="0" y1="0" x2="0" y2="1"><stop offset="0" stop-color="#f4f4f6"/><stop offset="1" stop-color="#dadbe0"/></linearGradient>
<linearGradient id="teal" x1="0" y1="0" x2="1" y2="1"><stop offset="0" stop-color="#b9f0ea"/><stop offset="1" stop-color="#4fa79b"/></linearGradient>
<linearGradient id="tealL" x1="0" y1="0" x2="1" y2="1"><stop offset="0" stop-color="#8fdad2"/><stop offset="1" stop-color="#2f8377"/></linearGradient>
<linearGradient id="lit" x1="0" y1="0" x2="0" y2="1"><stop offset="0" stop-color="#a9ece6"/><stop offset="1" stop-color="#e9fbf9"/></linearGradient>
<linearGradient id="tealF" x1="0" y1="0" x2=".3" y2="1"><stop offset="0" stop-color="#62b8ac"/><stop offset="1" stop-color="#236e62"/></linearGradient>
<linearGradient id="gryF" x1="0" y1="0" x2=".3" y2="1"><stop offset="0" stop-color="#909090"/><stop offset="1" stop-color="#545454"/></linearGradient>
<linearGradient id="pinkF" x1="0" y1="0" x2=".3" y2="1"><stop offset="0" stop-color="#c4aaa8"/><stop offset="1" stop-color="#7c5e5c"/></linearGradient>
<linearGradient id="litF" x1="0" y1="0" x2=".6" y2="1"><stop offset="0" stop-color="#a4ebe4"/><stop offset="1" stop-color="#f4fffd"/></linearGradient>
<linearGradient id="gry" x1="0" y1="0" x2="1" y2="1"><stop offset="0" stop-color="#9a9a9a"/><stop offset="1" stop-color="#4a4a4a"/></linearGradient>
<radialGradient id="sph" cx=".35" cy=".3" r=".8"><stop offset="0" stop-color="#e4fffb"/><stop offset=".45" stop-color="#7fd0c4"/><stop offset="1" stop-color="#1f6a5e"/></radialGradient>
<radialGradient id="bulb" cx=".4" cy=".35" r=".7"><stop offset="0" stop-color="#ffffff"/><stop offset="1" stop-color="#9adfd0"/></radialGradient>
<radialGradient id="bulbw" cx=".4" cy=".35" r=".7"><stop offset="0" stop-color="#ffffff"/><stop offset="1" stop-color="#9c9c9c"/></radialGradient>
<linearGradient id="lbt" x1="0" y1="0" x2="0" y2="1"><stop offset="0" stop-color="#f5f5f5"/><stop offset=".55" stop-color="#ededed"/><stop offset="1" stop-color="#d9d9d9"/></linearGradient>
</defs>
<defs><linearGradient id="blk" x1="0" y1="0" x2="1" y2="1"><stop offset="0" stop-color="#000"/><stop offset="1" stop-color="#555"/></linearGradient><clipPath id="cr"><rect x="957" y="60" width="491" height="500"/></clipPath></defs>
<path d="M85.6 81.0 h10.4 l-5.2 5.6 Z" fill="#000"/>
<path d="M105.3 75.0 v16" stroke="#7d7d8c" stroke-width="1"/><path d="M106.3 75.0 v16" stroke="#fff" stroke-width="1" opacity=".7"/>
<text x="115.8" y="89.7" font-family="Liberation Sans" font-weight="bold" font-size="16.4" fill="#0b3b2e" stroke="#0b3b2e" stroke-width=".4">P</text>
<g transform="translate(137.60 76.20)" ><path d="M0.5 9.5 L14 9.5 L14 13.8 L11 13.8 L11 12 L3.5 12 L3.5 13.8 L0.5 13.8Z" fill="#6a6a6a"/><rect x="6.3" y="3.5" width="1.8" height="6.5" fill="#444"/><circle cx="7.2" cy="2.6" r="2.3" fill="#5fb5a5" stroke="#3a3a3a" stroke-width=".6"/><circle cx="6.6" cy="2" r=".8" fill="#cfeee6"/><rect x="1.6" y="8.2" width="2.4" height="1.3" fill="#5fb5a5"/></g>
<path d="M159.5 75.0 v16" stroke="#7d7d8c" stroke-width="1"/><path d="M160.5 75.0 v16" stroke="#fff" stroke-width="1" opacity=".7"/>
<g transform="translate(168.00 75.60)" ><path d="M0.7 3.7 L7.9 0.5 L15.1 3.7 L14.3 10.9 L8.8 15.1 L1.6 11.9 Z M0.7 3.7 L8.3 7.3 L15.1 3.7 M8.3 7.3 L8.8 15.1" fill="#dfe3f2" fill-opacity=".5" stroke="#3a3a3a" stroke-width="1.25" stroke-linejoin="round"/></g>
<g transform="translate(191.00 75.60)" ><path d="M7.9 0.5 L7.6 8.6 M7.6 8.6 L1.6 11.9 M7.6 8.6 L14.3 10.9" stroke="#7a7a7a" stroke-width="1.1" fill="none"/><path d="M0.7 3.7 L7.9 0.5 L15.1 3.7 L14.3 10.9 L8.8 15.1 L1.6 11.9 Z M0.7 3.7 L8.3 7.3 L15.1 3.7 M8.3 7.3 L8.8 15.1" fill="#dfe3f2" fill-opacity=".5" stroke="#3a3a3a" stroke-width="1.25" stroke-linejoin="round"/></g>
<rect x="211.7" y="74.7" width="21.7" height="17.6" rx="3.5" fill="url(#selD)" stroke="#5e6270" stroke-width="1"/><rect x="212.7" y="75.7" width="19.7" height="15.6" rx="2.5" fill="none" stroke="#fff" stroke-width="1" opacity=".55"/>
<g transform="translate(215.00 75.80)" ><polygon points="0.7,3.7 7.9,0.5 15.1,3.7 8.3,7.3" fill="#9de9e1"/><polygon points="0.7,3.7 8.3,7.3 8.8,15.1 1.6,11.9" fill="url(#litF)"/><polygon points="8.3,7.3 15.1,3.7 14.3,10.9 8.8,15.1" fill="#eefdfb"/><path d="M0.7 3.7 L7.9 0.5 L15.1 3.7 L14.3 10.9 L8.8 15.1 L1.6 11.9 Z" fill="none" stroke="#5a5346" stroke-width="1.2" stroke-linejoin="round"/></g>
<g transform="translate(237.40 75.60)" ><path d="M-1 12 L6 10 L9 15.5 L-1 15.5Z" fill="#555" opacity=".55"/><polygon points="0.7,3.7 7.9,0.5 15.1,3.7 8.3,7.3" fill="#a4ebe3"/><polygon points="0.7,3.7 8.3,7.3 8.8,15.1 1.6,11.9" fill="url(#tealF)"/><polygon points="8.3,7.3 15.1,3.7 14.3,10.9 8.8,15.1" fill="#86ded4"/><path d="M0.7 3.7 L7.9 0.5 L15.1 3.7 L14.3 10.9 L8.8 15.1 L1.6 11.9 Z M0.7 3.7 L8.3 7.3 L15.1 3.7 M8.3 7.3 L8.8 15.1" fill="none" stroke="#1f2f2c" stroke-width="1.2" stroke-linejoin="round"/></g>
<g transform="translate(260.70 75.60)" ><path d="M-1 12 L6 10 L9 15.5 L-1 15.5Z" fill="#555" opacity=".55"/><polygon points="0.7,3.7 7.9,0.5 15.1,3.7 8.3,7.3" fill="#d4d4d4"/><polygon points="0.7,3.7 8.3,7.3 8.8,15.1 1.6,11.9" fill="url(#gryF)"/><polygon points="8.3,7.3 15.1,3.7 14.3,10.9 8.8,15.1" fill="#e2e2e2"/><path d="M0.7 3.7 L7.9 0.5 L15.1 3.7 L14.3 10.9 L8.8 15.1 L1.6 11.9 Z M0.7 3.7 L8.3 7.3 L15.1 3.7 M8.3 7.3 L8.8 15.1" fill="none" stroke="#242424" stroke-width="1.2" stroke-linejoin="round"/></g>
<g transform="translate(283.60 75.60)" ><path d="M-1 12 L6 10 L9 15.5 L-1 15.5Z" fill="#555" opacity=".55"/><polygon points="0.7,3.7 7.9,0.5 15.1,3.7 8.3,7.3" fill="#a6ece4"/><polygon points="0.7,3.7 8.3,7.3 8.8,15.1 1.6,11.9" fill="url(#tealF)"/><polygon points="8.3,7.3 15.1,3.7 14.3,10.9 8.8,15.1" fill="#7fd8cd"/><path d="M0.7 3.7 L7.9 0.5 L15.1 3.7 L14.3 10.9 L8.8 15.1 L1.6 11.9 Z" fill="none" stroke="#2a6e64" stroke-width="0.7" stroke-linejoin="round"/></g>
<g transform="translate(306.00 75.20)" ><polygon points="9,1 15.5,4 15.5,14 9,10.5" fill="#1f7a6c" stroke="#145046" stroke-width=".6"/><polygon points="5,2 11.5,5 11.5,15 5,11.5" fill="#49ab9d" stroke="#1c5d52" stroke-width=".6"/><polygon points="0.8,3 7.5,6 7.5,15.5 0.8,12" fill="url(#lit)" stroke="#2d6b62" stroke-width=".8"/></g>
<g transform="translate(330.4 76.6) scale(.93)"><g transform="translate(0.00 0.00)" ><path d="M-1 12 L6 10 L9 15.5 L-1 15.5Z" fill="#555" opacity=".55"/><polygon points="0.7,3.7 7.9,0.5 15.1,3.7 8.3,7.3" fill="#efe2e1"/><polygon points="0.7,3.7 8.3,7.3 8.8,15.1 1.6,11.9" fill="url(#pinkF)"/><polygon points="8.3,7.3 15.1,3.7 14.3,10.9 8.8,15.1" fill="#dccac8"/><path d="M0.7 3.7 L7.9 0.5 L15.1 3.7 L14.3 10.9 L8.8 15.1 L1.6 11.9 Z" fill="none" stroke="#4d3a38" stroke-width="0.8" stroke-linejoin="round"/></g></g>
<g transform="translate(353.00 75.20)" ><polygon points="7,0.5 14.5,3.5 14.5,12.5 7,10" fill="#6a6a6a"/><polygon points="4.5,2 11.5,5 11.5,14 4.5,11.5" fill="#8a8a8a"/><polygon points="1,3.5 8,6 8,15 1,12.5" fill="#777"/><circle cx="4.6" cy="9.4" r="3.3" fill="#8f8f8f"/><path d="M6.300 7.700 Q4.800 6.700 3.500 7.600 Q2.700 8.800 4.600 9.400 Q6.500 10 5.900 11.300 Q4.500 12.300 2.800 11.200" fill="none" stroke="#111" stroke-width="1.150"/></g>
<rect x="375.0" y="75.4" width="16" height="15.5" fill="#c4c4c4"/>
<g transform="translate(375.60 75.80)" ><path d="M-1 12 L6 10 L9 15.5 L-1 15.5Z" fill="#555" opacity=".55"/><polygon points="0.7,3.7 7.9,0.5 15.1,3.7 8.3,7.3" fill="#ead6f4"/><polygon points="0.7,3.7 8.3,7.3 8.8,15.1 1.6,11.9" fill="#a87cc4"/><polygon points="8.3,7.3 15.1,3.7 14.3,10.9 8.8,15.1" fill="#e6d0f2"/><path d="M0.7 3.7 L7.9 0.5 L15.1 3.7 L14.3 10.9 L8.8 15.1 L1.6 11.9 Z M0.7 3.7 L8.3 7.3 L15.1 3.7 M8.3 7.3 L8.8 15.1" fill="none" stroke="#7a5a8a" stroke-width="0.4" stroke-linejoin="round"/></g>
<g transform="translate(398.30 75.60)" ><g transform="translate(0.00 0.00)" ><path d="M-1 12 L6 10 L9 15.5 L-1 15.5Z" fill="#555" opacity=".55"/><polygon points="0.7,3.7 7.9,0.5 15.1,3.7 8.3,7.3" fill="#a4ece4"/><polygon points="0.7,3.7 8.3,7.3 8.8,15.1 1.6,11.9" fill="#5cb8ac"/><polygon points="8.3,7.3 15.1,3.7 14.3,10.9 8.8,15.1" fill="#82d8ce"/><path d="M0.7 3.7 L7.9 0.5 L15.1 3.7 L14.3 10.9 L8.8 15.1 L1.6 11.9 Z M0.7 3.7 L8.3 7.3 L15.1 3.7 M8.3 7.3 L8.8 15.1" fill="none" stroke="#1d4a42" stroke-width="0.9" stroke-linejoin="round"/></g><path d="M4.3 2.1 L11.8 5.4 M11.5 2.1 L4.5 5.5 M1.1 7.8 L8.5 11.2 L14.7 7.3 M5 5.6 L5.2 13.4 M11.7 5.5 L11.6 13" stroke="#1d5a50" stroke-width="1" fill="none"/></g>
<path d="M420.5 75.0 v16" stroke="#7d7d8c" stroke-width="1"/><path d="M421.5 75.0 v16" stroke="#fff" stroke-width="1" opacity=".7"/>
<g transform="translate(428.80 75.70)" ><rect x="0" y="0" width="16" height="15" fill="#d2d2d2"/><path d="M12.600 5.600 V3.600 Q12.600 1.700 10.400 1.700 H5.600 Q3.300 1.700 3.300 3.900 V11.200 Q3.300 13.400 5.600 13.400 H12.600 V7 H8.200 V9 H9.600 V11.300 H7.200 Q6.500 11.300 6.500 10.600 V4.500 Q6.500 3.800 7.200 3.800 H8.900 Q9.600 3.800 9.600 4.500 V5.600 Z" fill="#000"/></g>
<path d="M451.2 75.0 v16" stroke="#7d7d8c" stroke-width="1"/><path d="M452.2 75.0 v16" stroke="#fff" stroke-width="1" opacity=".7"/>
<g transform="translate(462.20 75.60)" ><path d="M2.6 7.5 V4.6 Q2.6 1 5.4 1 Q8.2 1 8.2 4.6 V7.5" fill="none" stroke="#3c9fdf" stroke-width="2.1"/><rect x="0.4" y="6.6" width="10" height="8" rx="1" fill="#f3b45a" stroke="#c98a2e" stroke-width=".8"/><rect x="1.3" y="7.4" width="8.2" height="2.4" fill="#f9d69a" opacity=".8"/><rect x="4.8" y="9.3" width="1.2" height="2.8" fill="#6d4a12"/></g>
<g transform="translate(483.00 79.40)" ><path d="M0 4.6 Q6.5 -2.6 15 3.6 Q11 3 9 4 Q14 5 14.6 6 Q7.5 9.6 1.6 5.2 Z" fill="#111"/><ellipse cx="7.2" cy="4.3" rx="3.6" ry="1.9" fill="#c8c8c8"/><circle cx="7.4" cy="4.2" r="1.7" fill="#111"/><circle cx="6.8" cy="3.7" r=".5" fill="#eee"/></g>
<path d="M505.2 75.0 v16" stroke="#7d7d8c" stroke-width="1"/><path d="M506.2 75.0 v16" stroke="#fff" stroke-width="1" opacity=".7"/>
<g transform="translate(515.40 76.60)" ><path d="M1 9 L5 7.5 L6.3 8 L6.3 4.5 Q4.6 3.5 5 2 Q5.6 0 7.4 0 Q9.2 0 9.6 2 Q10 3.6 8.4 4.5 L8.6 8 L13.4 9.4 L14 13.8 L0.3 13.8 Z" fill="#111"/><circle cx="2.9" cy="9.6" r=".9" fill="#fff"/><circle cx="5.6" cy="12" r=".8" fill="#fff"/></g>
<rect x="534.6" y="74.6" width="21.9" height="17.4" rx="3.5" fill="url(#selD)" stroke="#5e6270" stroke-width="1"/><rect x="535.6" y="75.6" width="19.9" height="15.4" rx="2.5" fill="none" stroke="#fff" stroke-width="1" opacity=".55"/>
<path d="M537.3 86.2 a8.2 8.2 0 0 1 16.4 0 v4.4 h-16.4Z" fill="#ff8f8f"/>
<g transform="translate(538.40 76.80)" ><path d="M1 9 L5 7.5 L6.3 8 L6.3 4.5 Q4.6 3.5 5 2 Q5.6 0 7.4 0 Q9.2 0 9.6 2 Q10 3.6 8.4 4.5 L8.6 8 L13.4 9.4 L14 13.8 L0.3 13.8 Z" fill="#8a0808"/><circle cx="2.9" cy="9.6" r=".9" fill="#ffd0d0"/><circle cx="5.6" cy="12" r=".8" fill="#ffd0d0"/></g>
<path d="M560.0 81.0 l1.6 10 h-1.6Z" fill="#d11"/>
<text x="563.8" y="90.5" font-family="Liberation Sans" font-weight="normal" font-size="14.8" fill="#000" stroke="#000" stroke-width=".5">S</text>
<path d="M582.3 75.0 v16" stroke="#7d7d8c" stroke-width="1"/><path d="M583.3 75.0 v16" stroke="#fff" stroke-width="1" opacity=".7"/>
<g transform="translate(592.20 77.20)" ><rect x=".75" y=".75" width="12.2" height="11.8" fill="#e3e7f5" stroke="#000" stroke-width="1.5"/><rect x="1.5" y="9.8" width="10.7" height="2.2" fill="#3f84ff"/></g>
<path d="M613.3 75.0 v16" stroke="#7d7d8c" stroke-width="1"/><path d="M614.3 75.0 v16" stroke="#fff" stroke-width="1" opacity=".7"/>
<g transform="translate(624.00 75.60)" ><ellipse cx="6.3" cy="2.2" rx="2.6" ry="2.2" fill="#8a8a8a"/><rect x="4" y="2" width="4.6" height="4" fill="#777"/><path d="M0.4 14.8 L1.8 10.6 L12.4 10.6 L13 14.8Z" fill="#2a2a2a"/><rect x="3.6" y="4.6" width="8.8" height="8" fill="url(#blk)" stroke="#fff" stroke-width=".9"/></g>
<path d="M644.5 75.0 v16" stroke="#7d7d8c" stroke-width="1"/><path d="M645.5 75.0 v16" stroke="#fff" stroke-width="1" opacity=".7"/>
<g transform="translate(654.30 77.00)" ><rect x="6" y=".6" width="7.2" height="6.4" fill="#fff" stroke="#111" stroke-width="1"/><rect x="6" y=".3" width="7.2" height="1.8" fill="#111"/><rect x=".5" y="6.5" width="7.8" height="6.6" fill="#e9ecf6" stroke="#777" stroke-width="1"/><path d="M3 10.6 L7.6 6 L6 4.6 L10.6 3.6 L9.8 8.2 L8.6 7 L4 11.6Z" fill="#111"/></g>
<g transform="translate(677.80 78.20)" ><rect x=".8" y=".8" width="10.8" height="10.4" fill="#e9ecf6" stroke="#000" stroke-width="1.6"/><rect x=".8" y=".2" width="10.8" height="2.6" fill="#000"/></g>
<g clip-path="url(#cr)">
<path d="M961.8 81.0 h10.4 l-5.2 5.6 Z" fill="#000"/>
<path d="M981.5 75.0 v16" stroke="#7d7d8c" stroke-width="1"/><path d="M982.5 75.0 v16" stroke="#fff" stroke-width="1" opacity=".7"/>
<text x="992.4" y="89.9" font-family="Liberation Sans" font-weight="bold" font-size="17.2" fill="#0b3b2e" stroke="#0b3b2e" stroke-width=".7">T</text>
<g transform="translate(1013.80 76.20)" ><path d="M0.5 9.5 L14 9.5 L14 13.8 L11 13.8 L11 12 L3.5 12 L3.5 13.8 L0.5 13.8Z" fill="#6a6a6a"/><rect x="6.3" y="3.5" width="1.8" height="6.5" fill="#444"/><circle cx="7.2" cy="2.6" r="2.3" fill="#5fb5a5" stroke="#3a3a3a" stroke-width=".6"/><circle cx="6.6" cy="2" r=".8" fill="#cfeee6"/><rect x="1.6" y="8.2" width="2.4" height="1.3" fill="#5fb5a5"/></g>
<path d="M1035.7 75.0 v16" stroke="#7d7d8c" stroke-width="1"/><path d="M1036.7 75.0 v16" stroke="#fff" stroke-width="1" opacity=".7"/>
<rect x="1041.7" y="74.7" width="21.7" height="17.6" rx="3.5" fill="url(#selD)" stroke="#5e6270" stroke-width="1"/><rect x="1042.7" y="75.7" width="19.7" height="15.6" rx="2.5" fill="none" stroke="#fff" stroke-width="1" opacity=".55"/>
<g transform="translate(1044.20 75.60)" ><path d="M0.7 3.7 L7.9 0.5 L15.1 3.7 L14.3 10.9 L8.8 15.1 L1.6 11.9 Z M0.7 3.7 L8.3 7.3 L15.1 3.7 M8.3 7.3 L8.8 15.1" fill="#dfe3f2" fill-opacity=".5" stroke="#3a3a3a" stroke-width="1.25" stroke-linejoin="round"/></g>
<g transform="translate(1067.20 75.60)" ><path d="M7.9 0.5 L7.6 8.6 M7.6 8.6 L1.6 11.9 M7.6 8.6 L14.3 10.9" stroke="#7a7a7a" stroke-width="1.1" fill="none"/><path d="M0.7 3.7 L7.9 0.5 L15.1 3.7 L14.3 10.9 L8.8 15.1 L1.6 11.9 Z M0.7 3.7 L8.3 7.3 L15.1 3.7 M8.3 7.3 L8.8 15.1" fill="#dfe3f2" fill-opacity=".5" stroke="#3a3a3a" stroke-width="1.25" stroke-linejoin="round"/></g>
<g transform="translate(1091.20 75.80)" ><polygon points="0.7,3.7 7.9,0.5 15.1,3.7 8.3,7.3" fill="#9de9e1"/><polygon points="0.7,3.7 8.3,7.3 8.8,15.1 1.6,11.9" fill="url(#litF)"/><polygon points="8.3,7.3 15.1,3.7 14.3,10.9 8.8,15.1" fill="#eefdfb"/><path d="M0.7 3.7 L7.9 0.5 L15.1 3.7 L14.3 10.9 L8.8 15.1 L1.6 11.9 Z" fill="none" stroke="#5a5346" stroke-width="1.2" stroke-linejoin="round"/></g>
<g transform="translate(1113.60 75.60)" ><path d="M-1 12 L6 10 L9 15.5 L-1 15.5Z" fill="#555" opacity=".55"/><polygon points="0.7,3.7 7.9,0.5 15.1,3.7 8.3,7.3" fill="#a4ebe3"/><polygon points="0.7,3.7 8.3,7.3 8.8,15.1 1.6,11.9" fill="url(#tealF)"/><polygon points="8.3,7.3 15.1,3.7 14.3,10.9 8.8,15.1" fill="#86ded4"/><path d="M0.7 3.7 L7.9 0.5 L15.1 3.7 L14.3 10.9 L8.8 15.1 L1.6 11.9 Z M0.7 3.7 L8.3 7.3 L15.1 3.7 M8.3 7.3 L8.8 15.1" fill="none" stroke="#1f2f2c" stroke-width="1.2" stroke-linejoin="round"/></g>
<g transform="translate(1136.90 75.60)" ><path d="M-1 12 L6 10 L9 15.5 L-1 15.5Z" fill="#555" opacity=".55"/><polygon points="0.7,3.7 7.9,0.5 15.1,3.7 8.3,7.3" fill="#d4d4d4"/><polygon points="0.7,3.7 8.3,7.3 8.8,15.1 1.6,11.9" fill="url(#gryF)"/><polygon points="8.3,7.3 15.1,3.7 14.3,10.9 8.8,15.1" fill="#e2e2e2"/><path d="M0.7 3.7 L7.9 0.5 L15.1 3.7 L14.3 10.9 L8.8 15.1 L1.6 11.9 Z M0.7 3.7 L8.3 7.3 L15.1 3.7 M8.3 7.3 L8.8 15.1" fill="none" stroke="#242424" stroke-width="1.2" stroke-linejoin="round"/></g>
<g transform="translate(1159.80 75.60)" ><path d="M-1 12 L6 10 L9 15.5 L-1 15.5Z" fill="#555" opacity=".55"/><polygon points="0.7,3.7 7.9,0.5 15.1,3.7 8.3,7.3" fill="#a6ece4"/><polygon points="0.7,3.7 8.3,7.3 8.8,15.1 1.6,11.9" fill="url(#tealF)"/><polygon points="8.3,7.3 15.1,3.7 14.3,10.9 8.8,15.1" fill="#7fd8cd"/><path d="M0.7 3.7 L7.9 0.5 L15.1 3.7 L14.3 10.9 L8.8 15.1 L1.6 11.9 Z" fill="none" stroke="#2a6e64" stroke-width="0.7" stroke-linejoin="round"/></g>
<g transform="translate(1182.20 75.20)" ><polygon points="9,1 15.5,4 15.5,14 9,10.5" fill="#1f7a6c" stroke="#145046" stroke-width=".6"/><polygon points="5,2 11.5,5 11.5,15 5,11.5" fill="#49ab9d" stroke="#1c5d52" stroke-width=".6"/><polygon points="0.8,3 7.5,6 7.5,15.5 0.8,12" fill="url(#lit)" stroke="#2d6b62" stroke-width=".8"/></g>
<g transform="translate(1206.6 76.6) scale(.93)"><g transform="translate(0.00 0.00)" ><path d="M-1 12 L6 10 L9 15.5 L-1 15.5Z" fill="#555" opacity=".55"/><polygon points="0.7,3.7 7.9,0.5 15.1,3.7 8.3,7.3" fill="#efe2e1"/><polygon points="0.7,3.7 8.3,7.3 8.8,15.1 1.6,11.9" fill="url(#pinkF)"/><polygon points="8.3,7.3 15.1,3.7 14.3,10.9 8.8,15.1" fill="#dccac8"/><path d="M0.7 3.7 L7.9 0.5 L15.1 3.7 L14.3 10.9 L8.8 15.1 L1.6 11.9 Z" fill="none" stroke="#4d3a38" stroke-width="0.8" stroke-linejoin="round"/></g></g>
<g transform="translate(1229.20 75.20)" ><polygon points="7,0.5 14.5,3.5 14.5,12.5 7,10" fill="#6a6a6a"/><polygon points="4.5,2 11.5,5 11.5,14 4.5,11.5" fill="#8a8a8a"/><polygon points="1,3.5 8,6 8,15 1,12.5" fill="#777"/><circle cx="4.6" cy="9.4" r="3.3" fill="#8f8f8f"/><path d="M6.300 7.700 Q4.800 6.700 3.500 7.600 Q2.700 8.800 4.600 9.400 Q6.500 10 5.900 11.300 Q4.500 12.300 2.800 11.200" fill="none" stroke="#111" stroke-width="1.150"/></g>
<rect x="1251.2" y="75.4" width="16" height="15.5" fill="#c4c4c4"/>
<g transform="translate(1251.80 75.80)" ><path d="M-1 12 L6 10 L9 15.5 L-1 15.5Z" fill="#555" opacity=".55"/><polygon points="0.7,3.7 7.9,0.5 15.1,3.7 8.3,7.3" fill="#ead6f4"/><polygon points="0.7,3.7 8.3,7.3 8.8,15.1 1.6,11.9" fill="#a87cc4"/><polygon points="8.3,7.3 15.1,3.7 14.3,10.9 8.8,15.1" fill="#e6d0f2"/><path d="M0.7 3.7 L7.9 0.5 L15.1 3.7 L14.3 10.9 L8.8 15.1 L1.6 11.9 Z M0.7 3.7 L8.3 7.3 L15.1 3.7 M8.3 7.3 L8.8 15.1" fill="none" stroke="#7a5a8a" stroke-width="0.4" stroke-linejoin="round"/></g>
<g transform="translate(1274.50 75.60)" ><g transform="translate(0.00 0.00)" ><path d="M-1 12 L6 10 L9 15.5 L-1 15.5Z" fill="#555" opacity=".55"/><polygon points="0.7,3.7 7.9,0.5 15.1,3.7 8.3,7.3" fill="#a4ece4"/><polygon points="0.7,3.7 8.3,7.3 8.8,15.1 1.6,11.9" fill="#5cb8ac"/><polygon points="8.3,7.3 15.1,3.7 14.3,10.9 8.8,15.1" fill="#82d8ce"/><path d="M0.7 3.7 L7.9 0.5 L15.1 3.7 L14.3 10.9 L8.8 15.1 L1.6 11.9 Z M0.7 3.7 L8.3 7.3 L15.1 3.7 M8.3 7.3 L8.8 15.1" fill="none" stroke="#1d4a42" stroke-width="0.9" stroke-linejoin="round"/></g><path d="M4.3 2.1 L11.8 5.4 M11.5 2.1 L4.5 5.5 M1.1 7.8 L8.5 11.2 L14.7 7.3 M5 5.6 L5.2 13.4 M11.7 5.5 L11.6 13" stroke="#1d5a50" stroke-width="1" fill="none"/></g>
<path d="M1296.7 75.0 v16" stroke="#7d7d8c" stroke-width="1"/><path d="M1297.7 75.0 v16" stroke="#fff" stroke-width="1" opacity=".7"/>
<g transform="translate(1305.00 75.70)" ><rect x="0" y="0" width="16" height="15" fill="#d2d2d2"/><path d="M12.600 5.600 V3.600 Q12.600 1.700 10.400 1.700 H5.600 Q3.300 1.700 3.300 3.900 V11.200 Q3.300 13.400 5.600 13.400 H12.600 V7 H8.200 V9 H9.600 V11.300 H7.200 Q6.500 11.300 6.500 10.600 V4.500 Q6.500 3.800 7.200 3.800 H8.900 Q9.600 3.800 9.600 4.500 V5.600 Z" fill="#000"/></g>
<path d="M1327.4 75.0 v16" stroke="#7d7d8c" stroke-width="1"/><path d="M1328.4 75.0 v16" stroke="#fff" stroke-width="1" opacity=".7"/>
<g transform="translate(1338.40 75.60)" ><path d="M2.6 7.5 V4.6 Q2.6 1 5.4 1 Q8.2 1 8.2 4.6 V7.5" fill="none" stroke="#3c9fdf" stroke-width="2.1"/><rect x="0.4" y="6.6" width="10" height="8" rx="1" fill="#f3b45a" stroke="#c98a2e" stroke-width=".8"/><rect x="1.3" y="7.4" width="8.2" height="2.4" fill="#f9d69a" opacity=".8"/><rect x="4.8" y="9.3" width="1.2" height="2.8" fill="#6d4a12"/></g>
<g transform="translate(1359.20 79.40)" ><path d="M0 4.6 Q6.5 -2.6 15 3.6 Q11 3 9 4 Q14 5 14.6 6 Q7.5 9.6 1.6 5.2 Z" fill="#111"/><ellipse cx="7.2" cy="4.3" rx="3.6" ry="1.9" fill="#c8c8c8"/><circle cx="7.4" cy="4.2" r="1.7" fill="#111"/><circle cx="6.8" cy="3.7" r=".5" fill="#eee"/></g>
<path d="M1381.4 75.0 v16" stroke="#7d7d8c" stroke-width="1"/><path d="M1382.4 75.0 v16" stroke="#fff" stroke-width="1" opacity=".7"/>
<g transform="translate(1391.60 76.60)" ><path d="M1 9 L5 7.5 L6.3 8 L6.3 4.5 Q4.6 3.5 5 2 Q5.6 0 7.4 0 Q9.2 0 9.6 2 Q10 3.6 8.4 4.5 L8.6 8 L13.4 9.4 L14 13.8 L0.3 13.8 Z" fill="#111"/><circle cx="2.9" cy="9.6" r=".9" fill="#fff"/><circle cx="5.6" cy="12" r=".8" fill="#fff"/></g>
<path d="M1413.5 86.2 a8.2 8.2 0 0 1 16.4 0 v4.4 h-16.4Z" fill="#ff8f8f"/>
<g transform="translate(1414.60 76.80)" ><path d="M1 9 L5 7.5 L6.3 8 L6.3 4.5 Q4.6 3.5 5 2 Q5.6 0 7.4 0 Q9.2 0 9.6 2 Q10 3.6 8.4 4.5 L8.6 8 L13.4 9.4 L14 13.8 L0.3 13.8 Z" fill="#8a0808"/><circle cx="2.9" cy="9.6" r=".9" fill="#ffd0d0"/><circle cx="5.6" cy="12" r=".8" fill="#ffd0d0"/></g>
<path d="M1436.2 81.0 l1.6 10 h-1.6Z" fill="#d11"/>
<text x="1440.0" y="90.5" font-family="Liberation Sans" font-weight="normal" font-size="14.8" fill="#000" stroke="#000" stroke-width=".5">S</text>
<path d="M1458.5 75.0 v16" stroke="#7d7d8c" stroke-width="1"/><path d="M1459.5 75.0 v16" stroke="#fff" stroke-width="1" opacity=".7"/>
<g transform="translate(1468.40 77.20)" ><rect x=".75" y=".75" width="12.2" height="11.8" fill="#e3e7f5" stroke="#000" stroke-width="1.5"/><rect x="1.5" y="9.8" width="10.7" height="2.2" fill="#3f84ff"/></g>
<path d="M1489.5 75.0 v16" stroke="#7d7d8c" stroke-width="1"/><path d="M1490.5 75.0 v16" stroke="#fff" stroke-width="1" opacity=".7"/>
<g transform="translate(1500.20 75.60)" ><ellipse cx="6.3" cy="2.2" rx="2.6" ry="2.2" fill="#8a8a8a"/><rect x="4" y="2" width="4.6" height="4" fill="#777"/><path d="M0.4 14.8 L1.8 10.6 L12.4 10.6 L13 14.8Z" fill="#2a2a2a"/><rect x="3.6" y="4.6" width="8.8" height="8" fill="url(#blk)" stroke="#fff" stroke-width=".9"/></g>
<path d="M1520.7 75.0 v16" stroke="#7d7d8c" stroke-width="1"/><path d="M1521.7 75.0 v16" stroke="#fff" stroke-width="1" opacity=".7"/>
<g transform="translate(1530.50 77.00)" ><rect x="6" y=".6" width="7.2" height="6.4" fill="#fff" stroke="#111" stroke-width="1"/><rect x="6" y=".3" width="7.2" height="1.8" fill="#111"/><rect x=".5" y="6.5" width="7.8" height="6.6" fill="#e9ecf6" stroke="#777" stroke-width="1"/><path d="M3 10.6 L7.6 6 L6 4.6 L10.6 3.6 L9.8 8.2 L8.6 7 L4 11.6Z" fill="#111"/></g>
<g transform="translate(1554.00 78.20)" ><rect x=".8" y=".8" width="10.8" height="10.4" fill="#e9ecf6" stroke="#000" stroke-width="1.6"/><rect x=".8" y=".2" width="10.8" height="2.6" fill="#000"/></g>
<path d="M961.8 543.2 h10.4 l-5.2 5.6 Z" fill="#000"/>
<path d="M981.5 537.2 v16" stroke="#7d7d8c" stroke-width="1"/><path d="M982.5 537.2 v16" stroke="#fff" stroke-width="1" opacity=".7"/>
<text x="992.4" y="552.1" font-family="Liberation Sans" font-weight="bold" font-size="17.2" fill="#0b3b2e" stroke="#0b3b2e" stroke-width=".7">T</text>
<g transform="translate(1013.80 538.40)" ><path d="M0.5 9.5 L14 9.5 L14 13.8 L11 13.8 L11 12 L3.5 12 L3.5 13.8 L0.5 13.8Z" fill="#6a6a6a"/><rect x="6.3" y="3.5" width="1.8" height="6.5" fill="#444"/><circle cx="7.2" cy="2.6" r="2.3" fill="#5fb5a5" stroke="#3a3a3a" stroke-width=".6"/><circle cx="6.6" cy="2" r=".8" fill="#cfeee6"/><rect x="1.6" y="8.2" width="2.4" height="1.3" fill="#5fb5a5"/></g>
<path d="M1035.7 537.2 v16" stroke="#7d7d8c" stroke-width="1"/><path d="M1036.7 537.2 v16" stroke="#fff" stroke-width="1" opacity=".7"/>
<rect x="1041.7" y="536.9" width="21.7" height="17.6" rx="3.5" fill="url(#selD)" stroke="#5e6270" stroke-width="1"/><rect x="1042.7" y="537.9" width="19.7" height="15.6" rx="2.5" fill="none" stroke="#fff" stroke-width="1" opacity=".55"/>
<g transform="translate(1044.20 537.80)" ><path d="M0.7 3.7 L7.9 0.5 L15.1 3.7 L14.3 10.9 L8.8 15.1 L1.6 11.9 Z M0.7 3.7 L8.3 7.3 L15.1 3.7 M8.3 7.3 L8.8 15.1" fill="#dfe3f2" fill-opacity=".5" stroke="#3a3a3a" stroke-width="1.25" stroke-linejoin="round"/></g>
<g transform="translate(1067.20 537.80)" ><path d="M7.9 0.5 L7.6 8.6 M7.6 8.6 L1.6 11.9 M7.6 8.6 L14.3 10.9" stroke="#7a7a7a" stroke-width="1.1" fill="none"/><path d="M0.7 3.7 L7.9 0.5 L15.1 3.7 L14.3 10.9 L8.8 15.1 L1.6 11.9 Z M0.7 3.7 L8.3 7.3 L15.1 3.7 M8.3 7.3 L8.8 15.1" fill="#dfe3f2" fill-opacity=".5" stroke="#3a3a3a" stroke-width="1.25" stroke-linejoin="round"/></g>
<g transform="translate(1091.20 538.00)" ><polygon points="0.7,3.7 7.9,0.5 15.1,3.7 8.3,7.3" fill="#9de9e1"/><polygon points="0.7,3.7 8.3,7.3 8.8,15.1 1.6,11.9" fill="url(#litF)"/><polygon points="8.3,7.3 15.1,3.7 14.3,10.9 8.8,15.1" fill="#eefdfb"/><path d="M0.7 3.7 L7.9 0.5 L15.1 3.7 L14.3 10.9 L8.8 15.1 L1.6 11.9 Z" fill="none" stroke="#5a5346" stroke-width="1.2" stroke-linejoin="round"/></g>
<g transform="translate(1113.60 537.80)" ><path d="M-1 12 L6 10 L9 15.5 L-1 15.5Z" fill="#555" opacity=".55"/><polygon points="0.7,3.7 7.9,0.5 15.1,3.7 8.3,7.3" fill="#a4ebe3"/><polygon points="0.7,3.7 8.3,7.3 8.8,15.1 1.6,11.9" fill="url(#tealF)"/><polygon points="8.3,7.3 15.1,3.7 14.3,10.9 8.8,15.1" fill="#86ded4"/><path d="M0.7 3.7 L7.9 0.5 L15.1 3.7 L14.3 10.9 L8.8 15.1 L1.6 11.9 Z M0.7 3.7 L8.3 7.3 L15.1 3.7 M8.3 7.3 L8.8 15.1" fill="none" stroke="#1f2f2c" stroke-width="1.2" stroke-linejoin="round"/></g>
<g transform="translate(1136.90 537.80)" ><path d="M-1 12 L6 10 L9 15.5 L-1 15.5Z" fill="#555" opacity=".55"/><polygon points="0.7,3.7 7.9,0.5 15.1,3.7 8.3,7.3" fill="#d4d4d4"/><polygon points="0.7,3.7 8.3,7.3 8.8,15.1 1.6,11.9" fill="url(#gryF)"/><polygon points="8.3,7.3 15.1,3.7 14.3,10.9 8.8,15.1" fill="#e2e2e2"/><path d="M0.7 3.7 L7.9 0.5 L15.1 3.7 L14.3 10.9 L8.8 15.1 L1.6 11.9 Z M0.7 3.7 L8.3 7.3 L15.1 3.7 M8.3 7.3 L8.8 15.1" fill="none" stroke="#242424" stroke-width="1.2" stroke-linejoin="round"/></g>
<g transform="translate(1159.80 537.80)" ><path d="M-1 12 L6 10 L9 15.5 L-1 15.5Z" fill="#555" opacity=".55"/><polygon points="0.7,3.7 7.9,0.5 15.1,3.7 8.3,7.3" fill="#a6ece4"/><polygon points="0.7,3.7 8.3,7.3 8.8,15.1 1.6,11.9" fill="url(#tealF)"/><polygon points="8.3,7.3 15.1,3.7 14.3,10.9 8.8,15.1" fill="#7fd8cd"/><path d="M0.7 3.7 L7.9 0.5 L15.1 3.7 L14.3 10.9 L8.8 15.1 L1.6 11.9 Z" fill="none" stroke="#2a6e64" stroke-width="0.7" stroke-linejoin="round"/></g>
<g transform="translate(1182.20 537.40)" ><polygon points="9,1 15.5,4 15.5,14 9,10.5" fill="#1f7a6c" stroke="#145046" stroke-width=".6"/><polygon points="5,2 11.5,5 11.5,15 5,11.5" fill="#49ab9d" stroke="#1c5d52" stroke-width=".6"/><polygon points="0.8,3 7.5,6 7.5,15.5 0.8,12" fill="url(#lit)" stroke="#2d6b62" stroke-width=".8"/></g>
<g transform="translate(1206.6 538.8) scale(.93)"><g transform="translate(0.00 0.00)" ><path d="M-1 12 L6 10 L9 15.5 L-1 15.5Z" fill="#555" opacity=".55"/><polygon points="0.7,3.7 7.9,0.5 15.1,3.7 8.3,7.3" fill="#efe2e1"/><polygon points="0.7,3.7 8.3,7.3 8.8,15.1 1.6,11.9" fill="url(#pinkF)"/><polygon points="8.3,7.3 15.1,3.7 14.3,10.9 8.8,15.1" fill="#dccac8"/><path d="M0.7 3.7 L7.9 0.5 L15.1 3.7 L14.3 10.9 L8.8 15.1 L1.6 11.9 Z" fill="none" stroke="#4d3a38" stroke-width="0.8" stroke-linejoin="round"/></g></g>
<g transform="translate(1229.20 537.40)" ><polygon points="7,0.5 14.5,3.5 14.5,12.5 7,10" fill="#6a6a6a"/><polygon points="4.5,2 11.5,5 11.5,14 4.5,11.5" fill="#8a8a8a"/><polygon points="1,3.5 8,6 8,15 1,12.5" fill="#777"/><circle cx="4.6" cy="9.4" r="3.3" fill="#8f8f8f"/><path d="M6.300 7.700 Q4.800 6.700 3.500 7.600 Q2.700 8.800 4.600 9.400 Q6.500 10 5.900 11.300 Q4.500 12.300 2.800 11.200" fill="none" stroke="#111" stroke-width="1.150"/></g>
<rect x="1251.2" y="537.6" width="16" height="15.5" fill="#c4c4c4"/>
<g transform="translate(1251.80 538.00)" ><path d="M-1 12 L6 10 L9 15.5 L-1 15.5Z" fill="#555" opacity=".55"/><polygon points="0.7,3.7 7.9,0.5 15.1,3.7 8.3,7.3" fill="#ead6f4"/><polygon points="0.7,3.7 8.3,7.3 8.8,15.1 1.6,11.9" fill="#a87cc4"/><polygon points="8.3,7.3 15.1,3.7 14.3,10.9 8.8,15.1" fill="#e6d0f2"/><path d="M0.7 3.7 L7.9 0.5 L15.1 3.7 L14.3 10.9 L8.8 15.1 L1.6 11.9 Z M0.7 3.7 L8.3 7.3 L15.1 3.7 M8.3 7.3 L8.8 15.1" fill="none" stroke="#7a5a8a" stroke-width="0.4" stroke-linejoin="round"/></g>
<g transform="translate(1274.50 537.80)" ><g transform="translate(0.00 0.00)" ><path d="M-1 12 L6 10 L9 15.5 L-1 15.5Z" fill="#555" opacity=".55"/><polygon points="0.7,3.7 7.9,0.5 15.1,3.7 8.3,7.3" fill="#a4ece4"/><polygon points="0.7,3.7 8.3,7.3 8.8,15.1 1.6,11.9" fill="#5cb8ac"/><polygon points="8.3,7.3 15.1,3.7 14.3,10.9 8.8,15.1" fill="#82d8ce"/><path d="M0.7 3.7 L7.9 0.5 L15.1 3.7 L14.3 10.9 L8.8 15.1 L1.6 11.9 Z M0.7 3.7 L8.3 7.3 L15.1 3.7 M8.3 7.3 L8.8 15.1" fill="none" stroke="#1d4a42" stroke-width="0.9" stroke-linejoin="round"/></g><path d="M4.3 2.1 L11.8 5.4 M11.5 2.1 L4.5 5.5 M1.1 7.8 L8.5 11.2 L14.7 7.3 M5 5.6 L5.2 13.4 M11.7 5.5 L11.6 13" stroke="#1d5a50" stroke-width="1" fill="none"/></g>
<path d="M1296.7 537.2 v16" stroke="#7d7d8c" stroke-width="1"/><path d="M1297.7 537.2 v16" stroke="#fff" stroke-width="1" opacity=".7"/>
<g transform="translate(1305.00 537.90)" ><rect x="0" y="0" width="16" height="15" fill="#d2d2d2"/><path d="M12.600 5.600 V3.600 Q12.600 1.700 10.400 1.700 H5.600 Q3.300 1.700 3.300 3.900 V11.200 Q3.300 13.400 5.600 13.400 H12.600 V7 H8.200 V9 H9.600 V11.300 H7.200 Q6.500 11.300 6.500 10.600 V4.500 Q6.500 3.800 7.200 3.800 H8.900 Q9.600 3.800 9.600 4.500 V5.600 Z" fill="#000"/></g>
<path d="M1327.4 537.2 v16" stroke="#7d7d8c" stroke-width="1"/><path d="M1328.4 537.2 v16" stroke="#fff" stroke-width="1" opacity=".7"/>
<g transform="translate(1338.40 537.80)" ><path d="M2.6 7.5 V4.6 Q2.6 1 5.4 1 Q8.2 1 8.2 4.6 V7.5" fill="none" stroke="#3c9fdf" stroke-width="2.1"/><rect x="0.4" y="6.6" width="10" height="8" rx="1" fill="#f3b45a" stroke="#c98a2e" stroke-width=".8"/><rect x="1.3" y="7.4" width="8.2" height="2.4" fill="#f9d69a" opacity=".8"/><rect x="4.8" y="9.3" width="1.2" height="2.8" fill="#6d4a12"/></g>
<g transform="translate(1359.20 541.60)" ><path d="M0 4.6 Q6.5 -2.6 15 3.6 Q11 3 9 4 Q14 5 14.6 6 Q7.5 9.6 1.6 5.2 Z" fill="#111"/><ellipse cx="7.2" cy="4.3" rx="3.6" ry="1.9" fill="#c8c8c8"/><circle cx="7.4" cy="4.2" r="1.7" fill="#111"/><circle cx="6.8" cy="3.7" r=".5" fill="#eee"/></g>
<path d="M1381.4 537.2 v16" stroke="#7d7d8c" stroke-width="1"/><path d="M1382.4 537.2 v16" stroke="#fff" stroke-width="1" opacity=".7"/>
<g transform="translate(1391.60 538.80)" ><path d="M1 9 L5 7.5 L6.3 8 L6.3 4.5 Q4.6 3.5 5 2 Q5.6 0 7.4 0 Q9.2 0 9.6 2 Q10 3.6 8.4 4.5 L8.6 8 L13.4 9.4 L14 13.8 L0.3 13.8 Z" fill="#111"/><circle cx="2.9" cy="9.6" r=".9" fill="#fff"/><circle cx="5.6" cy="12" r=".8" fill="#fff"/></g>
<path d="M1413.5 548.4 a8.2 8.2 0 0 1 16.4 0 v4.4 h-16.4Z" fill="#ff8f8f"/>
<g transform="translate(1414.60 539.00)" ><path d="M1 9 L5 7.5 L6.3 8 L6.3 4.5 Q4.6 3.5 5 2 Q5.6 0 7.4 0 Q9.2 0 9.6 2 Q10 3.6 8.4 4.5 L8.6 8 L13.4 9.4 L14 13.8 L0.3 13.8 Z" fill="#8a0808"/><circle cx="2.9" cy="9.6" r=".9" fill="#ffd0d0"/><circle cx="5.6" cy="12" r=".8" fill="#ffd0d0"/></g>
<path d="M1436.2 543.2 l1.6 10 h-1.6Z" fill="#d11"/>
<text x="1440.0" y="552.7" font-family="Liberation Sans" font-weight="normal" font-size="14.8" fill="#000" stroke="#000" stroke-width=".5">S</text>
<path d="M1458.5 537.2 v16" stroke="#7d7d8c" stroke-width="1"/><path d="M1459.5 537.2 v16" stroke="#fff" stroke-width="1" opacity=".7"/>
<g transform="translate(1468.40 539.40)" ><rect x=".75" y=".75" width="12.2" height="11.8" fill="#e3e7f5" stroke="#000" stroke-width="1.5"/><rect x="1.5" y="9.8" width="10.7" height="2.2" fill="#3f84ff"/></g>
<path d="M1489.5 537.2 v16" stroke="#7d7d8c" stroke-width="1"/><path d="M1490.5 537.2 v16" stroke="#fff" stroke-width="1" opacity=".7"/>
<g transform="translate(1500.20 537.80)" ><ellipse cx="6.3" cy="2.2" rx="2.6" ry="2.2" fill="#8a8a8a"/><rect x="4" y="2" width="4.6" height="4" fill="#777"/><path d="M0.4 14.8 L1.8 10.6 L12.4 10.6 L13 14.8Z" fill="#2a2a2a"/><rect x="3.6" y="4.6" width="8.8" height="8" fill="url(#blk)" stroke="#fff" stroke-width=".9"/></g>
<path d="M1520.7 537.2 v16" stroke="#7d7d8c" stroke-width="1"/><path d="M1521.7 537.2 v16" stroke="#fff" stroke-width="1" opacity=".7"/>
<g transform="translate(1530.50 539.20)" ><rect x="6" y=".6" width="7.2" height="6.4" fill="#fff" stroke="#111" stroke-width="1"/><rect x="6" y=".3" width="7.2" height="1.8" fill="#111"/><rect x=".5" y="6.5" width="7.8" height="6.6" fill="#e9ecf6" stroke="#777" stroke-width="1"/><path d="M3 10.6 L7.6 6 L6 4.6 L10.6 3.6 L9.8 8.2 L8.6 7 L4 11.6Z" fill="#111"/></g>
<g transform="translate(1554.00 540.40)" ><rect x=".8" y=".8" width="10.8" height="10.4" fill="#e9ecf6" stroke="#000" stroke-width="1.6"/><rect x=".8" y=".2" width="10.8" height="2.6" fill="#000"/></g>
</g></svg>
<svg class="a" style="left:0;top:0" width="1456" height="886" viewBox="0 0 1456 886">
<defs>
<linearGradient id="lbtn" x1="0" y1="0" x2="0" y2="1"><stop offset="0" stop-color="#f6f6f6"/><stop offset=".5" stop-color="#eeeeee"/><stop offset=".52" stop-color="#e2e2e2"/><stop offset="1" stop-color="#dadada"/></linearGradient>
<linearGradient id="pn" x1="0" y1="1" x2="1" y2="0"><stop offset="0" stop-color="#111"/><stop offset=".42" stop-color="#2a2a2a"/><stop offset=".52" stop-color="#c8c8c8"/><stop offset=".62" stop-color="#555"/><stop offset="1" stop-color="#222"/></linearGradient>
<linearGradient id="coneg" x1="0" y1="0" x2="1" y2="0"><stop offset="0" stop-color="#4a9c90"/><stop offset=".4" stop-color="#c8f8f2"/><stop offset="1" stop-color="#2c7468"/></linearGradient>
<linearGradient id="cylg" x1="0" y1="0" x2="1" y2="0"><stop offset="0" stop-color="#7cccc0"/><stop offset=".3" stop-color="#b4f0e8"/><stop offset="1" stop-color="#1c544c"/></linearGradient>
<radialGradient id="sph2" cx=".55" cy=".3" r=".75"><stop offset="0" stop-color="#fff"/><stop offset=".3" stop-color="#9ce4d8"/><stop offset="1" stop-color="#143c36"/></radialGradient>
<linearGradient id="csgT" x1="0" y1="0" x2="0" y2="1"><stop offset="0" stop-color="#a4d4c8"/><stop offset="1" stop-color="#5c9c90"/></linearGradient>
<linearGradient id="csgB" x1="0" y1="0" x2="0" y2="1"><stop offset="0" stop-color="#2c74bc"/><stop offset="1" stop-color="#14447c"/></linearGradient>
<linearGradient id="csgB2" x1="0" y1="0" x2="0" y2="1"><stop offset="0" stop-color="#3c88d0"/><stop offset="1" stop-color="#2c6cb0"/></linearGradient>
<clipPath id="c33"><rect x="1" y="1" width="31.600" height="31.6" rx="3"/></clipPath>
</defs>
<rect x="9.6" y="96.4" width="33" height="33" rx="3.5" fill="url(#lbtn)" stroke="#9c9c9c" stroke-width="1"/><rect x="10.6" y="97.4" width="31" height="31" rx="2.6" fill="none" stroke="#fff" stroke-width="1" opacity=".8"/>
<g transform="translate(9.60 96.40)" ><rect x="2.4" y="2.4" width="28.4" height="28.4" fill="#8cbcb8"/><path d="M3.4 8 H10 L11.6 10 H22.4 V13.6 L25.4 12 H28.6 V23.6 H25.4 L22.4 22 V25.6 H4.4 Z" fill="url(#teal)" stroke="#17302c" stroke-width="1.3" stroke-linejoin="round"/><rect x="9" y="12.2" width="8" height="1.6" fill="#10201e"/><rect x="7.4" y="17.4" width="12.6" height="5.4" fill="#5aa79c" stroke="#17302c" stroke-width=".9"/><rect x="20" y="12" width="1.4" height="1.4" fill="#10e020"/><rect x="24.4" y="13.6" width="2" height="8.4" fill="#d8f4f0" opacity=".7"/></g>
<rect x="45.6" y="96.4" width="33" height="33" rx="3.5" fill="url(#lbtn)" stroke="#9c9c9c" stroke-width="1"/><rect x="46.6" y="97.4" width="31" height="31" rx="2.6" fill="none" stroke="#fff" stroke-width="1" opacity=".8"/>
<g transform="translate(45.60 96.40)" ><path d="M16.6 4.6 L26 9.6 V20.6 L16.6 26 L7.4 20.6 V9.6Z" fill="#d4f1ee" stroke="#1e3c38" stroke-width="1.4" stroke-linejoin="round"/><path d="M7.4 9.6 L16.6 14.4 L26 9.6 M16.6 14.4 V26" fill="none" stroke="#1e3c38" stroke-width="1.4"/><path d="M16.6 4.6 V15.4 L7.4 20.6 M16.6 15.4 L26 20.6" fill="none" stroke="#7cc4ba" stroke-width=".9"/></g>
<rect x="9.6" y="132.4" width="33" height="33" rx="3.5" fill="url(#lbtn)" stroke="#9c9c9c" stroke-width="1"/><rect x="10.6" y="133.4" width="31" height="31" rx="2.6" fill="none" stroke="#fff" stroke-width="1" opacity=".8"/>
<g transform="translate(9.60 132.40)" ><ellipse cx="16.8" cy="23" rx="12.4" ry="3.6" fill="#777" opacity=".45"/><path d="M4.6 22.6 L12 12.6 L15 9.4 L17.6 6.6 L20.4 10.6 L24 15 L29 22.4 Q17 27 4.6 22.6Z" fill="#4a4f4e"/><path d="M17.6 6.6 L20 10.8 L18.4 13.4 L16.6 10.8 L15 12.4 L15.6 9Z" fill="#d4efec"/><path d="M12 13 L10.4 22 M15 14 L15.4 24 M19.6 14 L21.4 23.6 M23 15.6 L26 23" stroke="#2c302f" stroke-width="1.1" fill="none"/><path d="M13.4 14 L13 23 M17.4 15 L18.4 24 M21.6 15 L24 23" stroke="#70787a" stroke-width=".8" fill="none"/></g>
<rect x="45.6" y="132.4" width="33" height="33" rx="3.5" fill="url(#lbtn)" stroke="#9c9c9c" stroke-width="1"/><rect x="46.6" y="133.4" width="31" height="31" rx="2.6" fill="none" stroke="#fff" stroke-width="1" opacity=".8"/>
<g transform="translate(45.60 132.40)" ><g transform="translate(16.8 16.6)"><path d="M0 -13.6 L4.6 -8.6 H2 V-5.6 H-2 V-8.6 H-4.6Z" fill="url(#teal)" stroke="#1e3c38" stroke-width=".9"/><g transform="rotate(90)"><path d="M0 -13.6 L4.6 -8.6 H2 V-5.6 H-2 V-8.6 H-4.6Z" fill="url(#teal)" stroke="#1e3c38" stroke-width=".9"/></g><g transform="rotate(180)"><path d="M0 -13.6 L4.6 -8.6 H2 V-5.6 H-2 V-8.6 H-4.6Z" fill="url(#teal)" stroke="#1e3c38" stroke-width=".9"/></g><g transform="rotate(270)"><path d="M0 -13.6 L4.6 -8.6 H2 V-5.6 H-2 V-8.6 H-4.6Z" fill="url(#teal)" stroke="#1e3c38" stroke-width=".9"/></g></g><path d="M12.6 12.6 H21 V15 H19.6 V14.2 H18 V19.4 H19 V20.6 H14.6 V19.4 H15.6 V14.2 H14 V15 H12.6Z" fill="#000"/></g>
<rect x="9.6" y="168.6" width="33" height="33" rx="3.5" fill="url(#lbtn)" stroke="#9c9c9c" stroke-width="1"/><rect x="10.6" y="169.6" width="31" height="31" rx="2.6" fill="none" stroke="#fff" stroke-width="1" opacity=".8"/>
<g transform="translate(9.60 168.60)" clip-path="url(#c33)"><path d="M1.4 1.4 L17.4 1.6 L2.4 19.6Z" fill="none" stroke="#5fb8aa" stroke-width="1.5"/><path d="M8.6 10.4 L12.6 12.8 L33 31 V33 H21.6 L8.8 15.6Z" fill="url(#pn)" stroke="#222" stroke-width=".6"/><path d="M6.8 8.6 L10.6 8.4 L12.4 12.6 L9 14.6Z" fill="#c9a184" stroke="#5a3a2a" stroke-width=".7"/><path d="M8.6 9 L10.6 13.4" stroke="#fff" stroke-width=".7"/></g>
<rect x="45.6" y="168.6" width="33" height="33" rx="3.5" fill="url(#lbtn)" stroke="#9c9c9c" stroke-width="1"/><rect x="46.6" y="169.6" width="31" height="31" rx="2.6" fill="none" stroke="#fff" stroke-width="1" opacity=".8"/>
<g style="filter:drop-shadow(.9px 1px .5px rgba(0,0,0,.6))"><g transform="translate(45.60 168.60)" ><path d="M5.6 6 L17 4.6 L26.6 7.6 L26 25.6 L19.6 27.4 L19.4 18 Q19 12.6 15.4 12.8 Q12.4 13.4 12.6 18 L12.4 23.4 L6.4 22Z" fill="#5a84c4" stroke="#1c2c48" stroke-width="1.1" stroke-linejoin="round"/><path d="M5.6 6 L17 4.6 L26.6 7.6 L20 9.6Z" fill="#8fb4e8"/><path d="M20 9.600 L26.6 7.6 L26 25.6 L19.6 27.4Z" fill="#3c62a4"/><path d="M12.6 18 Q12.6 13.4 15.4 12.8 Q13.4 15 13.8 18.6 L13.6 23.6 L12.4 23.4Z" fill="#2c4c88"/></g></g>
<rect x="9.6" y="228.2" width="33" height="33" rx="3.5" fill="url(#lbtn)" stroke="#9c9c9c" stroke-width="1"/><rect x="10.6" y="229.2" width="31" height="31" rx="2.6" fill="none" stroke="#fff" stroke-width="1" opacity=".8"/>
<g style="filter:drop-shadow(.9px 1px .5px rgba(0,0,0,.6))"><g transform="translate(9.60 228.20)" ><path d="M4.6 9.6 L15 4.6 L27.6 8.4 L26.4 19.6 L19 27.6 L6.6 21.6Z" fill="#4e9c90" stroke="#143430" stroke-width="1.2" stroke-linejoin="round"/><path d="M4.6 9.6 L15 4.6 L27.6 8.4 L17.6 13.6Z" fill="#a4ece2"/><path d="M17.6 13.6 L27.6 8.4 L26.4 19.600 L19 27.6Z" fill="url(#tealL)"/><path d="M4.6 9.6 L17.6 13.6 L19 27.6 L6.6 21.6Z" fill="url(#teal)"/></g></g>
<rect x="45.6" y="228.2" width="33" height="33" rx="3.5" fill="url(#lbtn)" stroke="#9c9c9c" stroke-width="1"/><rect x="46.6" y="229.2" width="31" height="31" rx="2.6" fill="none" stroke="#fff" stroke-width="1" opacity=".8"/>
<g style="filter:drop-shadow(.9px 1px .5px rgba(0,0,0,.6))"><g transform="translate(45.60 228.20)" ><path d="M16.6 3 L26 22.6 Q25 27.6 16.6 27.8 Q8 27.6 7.2 22.6Z" fill="url(#coneg)" stroke="#1c3c38" stroke-width=".9"/></g></g>
<rect x="9.6" y="264.4" width="33" height="33" rx="3.5" fill="url(#lbtn)" stroke="#9c9c9c" stroke-width="1"/><rect x="10.6" y="265.4" width="31" height="31" rx="2.6" fill="none" stroke="#fff" stroke-width="1" opacity=".8"/>
<g style="filter:drop-shadow(.9px 1px .5px rgba(0,0,0,.6))"><g transform="translate(9.60 264.40)" ><path d="M5.4 7 L10.6 5.6 L14 7.6 L14.6 10.6 L19 11.4 L20.6 14.6 L25 16 L27 19.6 L30 21.6 L29.6 24.6 L17 25.600 L8 22.6 L6 16Z" fill="#4a988c" stroke="#143430" stroke-width="1" stroke-linejoin="round"/><path d="M5.4 7 L10.6 5.6 L14 7.6 L9 9Z M9.600 12 L14.6 10.6 L19 11.4 L14 13.6Z M14 16.600 L20.6 14.6 L25 16 L19 18.6Z M18 21.6 L27 19.6 L30 21.6 L20.600 24Z" fill="#c4f4ee"/><path d="M9 9 L9.6 12 M14 13.6 L14 16.6 M19 18.6 L18 21.6" stroke="#143430" stroke-width=".8"/></g></g>
<rect x="45.6" y="264.4" width="33" height="33" rx="3.5" fill="url(#lbtn)" stroke="#9c9c9c" stroke-width="1"/><rect x="46.6" y="265.4" width="31" height="31" rx="2.6" fill="none" stroke="#fff" stroke-width="1" opacity=".8"/>
<g style="filter:drop-shadow(.9px 1px .5px rgba(0,0,0,.6))"><g transform="translate(45.60 264.40)" ><path d="M6.4 8.600 V22.6 Q8 28.4 16.6 28.4 Q25.400 28.400 27 22.6 V8.6Z" fill="url(#cylg)" stroke="#143430" stroke-width="1"/><ellipse cx="16.7" cy="8.6" rx="10.3" ry="4.4" fill="#a8ece2" stroke="#143430" stroke-width="1"/></g></g>
<rect x="9.6" y="300.4" width="33" height="33" rx="3.5" fill="url(#lbtn)" stroke="#9c9c9c" stroke-width="1"/><rect x="10.6" y="301.4" width="31" height="31" rx="2.6" fill="none" stroke="#fff" stroke-width="1" opacity=".8"/>
<g style="filter:drop-shadow(.9px 1px .5px rgba(0,0,0,.6))"><g transform="translate(9.60 300.40)" ><path d="M4.6 9.6 L16.600 6 L22.600 7.6 L22.8 10.6 L26.6 12 L26.8 15 L30 16.600 L30 21.6 L22.6 28.400 L6.400 22.600Z" fill="#4a988c" stroke="#143430" stroke-width="1.1" stroke-linejoin="round"/><path d="M4.6 9.6 L16.6 6 L22.6 7.6 L11 11.600Z" fill="#b4f0e8"/><path d="M11 11.600 L22.600 7.6 L22.8 10.6 L11.6 15Z" fill="#5cb0a4"/><path d="M11.6 15 L22.8 10.6 L26.6 12 L15.600 16.600Z" fill="#d4f8f4"/><path d="M15.6 16.600 L26.6 12 L26.8 15 L16 20.2Z" fill="#5cb0a4"/><path d="M16 20.2 L26.800 15 L30 16.6 L20.4 22Z" fill="#e0fcf8"/><path d="M20.4 22 L30 16.6 L30 21.6 L22.6 28.4Z" fill="#5cb0a4"/></g></g>
<rect x="45.6" y="300.4" width="33" height="33" rx="3.5" fill="url(#lbtn)" stroke="#9c9c9c" stroke-width="1"/><rect x="46.6" y="301.4" width="31" height="31" rx="2.6" fill="none" stroke="#fff" stroke-width="1" opacity=".8"/>
<g style="filter:drop-shadow(.9px 1px .5px rgba(0,0,0,.6))"><g transform="translate(45.60 300.40)" ><path d="M3.6 16 L15.6 9.4 L30 15.6 L19 24.6Z" fill="url(#lit)" stroke="#143430" stroke-width="1" stroke-linejoin="round"/><path d="M3.6 16 L19 24.6 L30 15.6 L30.4 16.8 L19 26 L3.6 17Z" fill="#1c4c44"/></g></g>
<rect x="9.6" y="336.4" width="33" height="33" rx="3.5" fill="url(#lbtn)" stroke="#9c9c9c" stroke-width="1"/><rect x="10.6" y="337.4" width="31" height="31" rx="2.6" fill="none" stroke="#fff" stroke-width="1" opacity=".8"/>
<g style="filter:drop-shadow(.9px 1px .5px rgba(0,0,0,.6))"><g transform="translate(9.60 336.40)" ><path d="M4 8 L7.600 5.400 L13.6 6 L15.6 8.6 L19.6 9 L22 12 L25.600 13 L27.6 17 L30 20 L29.600 23.4 L16 24.6 L11 21 L9 15 L4.600 11Z" fill="#4a988c" stroke="#143430" stroke-width="1" stroke-linejoin="round"/><path d="M4 8 L7.6 5.4 L13.6 6 L10.6 8.6Z M9.600 11 L15.6 8.6 L19.6 9 L14 12.4Z M12.6 15.400 L22 12 L25.600 13 L15 17.6Z M15 20.600 L27.6 17 L30 20 L17.6 23Z" fill="#c4f4ee"/></g></g>
<rect x="45.6" y="336.4" width="33" height="33" rx="3.5" fill="url(#lbtn)" stroke="#9c9c9c" stroke-width="1"/><rect x="46.6" y="337.4" width="31" height="31" rx="2.6" fill="none" stroke="#fff" stroke-width="1" opacity=".8"/>
<g style="filter:drop-shadow(.9px 1px .5px rgba(0,0,0,.6))"><g transform="translate(45.60 336.40)" ><circle cx="16.6" cy="17" r="11.4" fill="url(#sph2)" stroke="#143430" stroke-width=".9"/></g></g>
<rect x="9.6" y="372.5" width="33" height="33" rx="3.5" fill="url(#lbtn)" stroke="#9c9c9c" stroke-width="1"/><rect x="10.6" y="373.5" width="31" height="31" rx="2.6" fill="none" stroke="#fff" stroke-width="1" opacity=".8"/>
<g style="filter:drop-shadow(.9px 1px .5px rgba(0,0,0,.6))"><g transform="translate(9.60 372.50)" ><path d="M11.6 4 L22.600 9 V29 L11.6 24Z" fill="#6cbcb0" fill-opacity=".8" stroke="#0c2420" stroke-width=".9"/><path d="M21.600 3.600 L10.600 9 V29 L21.6 24Z" fill="#8cd4c8" fill-opacity=".75" stroke="#0c2420" stroke-width=".9"/><path d="M8.6 12 L16.6 7 L24.6 12 V28.600 L16.600 23.6 L8.6 28.600Z" fill="#a8e8e0" fill-opacity=".55" stroke="#0c2420" stroke-width="1"/></g></g>
<rect x="9.6" y="432.4" width="33" height="33" rx="3.5" fill="#fafdff" stroke="#3cb0ee" stroke-width="1.3"/><rect x="10.8" y="433.6" width="30.6" height="30.6" rx="2.6" fill="none" stroke="#c2e8fb" stroke-width="1"/>
<g transform="translate(9.60 432.40)" ><rect x="4.600" y="14" width="14.300" height="13.800" fill="#000" opacity=".3"/><rect x="3.450" y="12.750" width="14.300" height="13.800" fill="url(#csgT)" stroke="#000" stroke-width="1.3"/><rect x="11.350" y="4.850" width="14.200" height="13.900" fill="url(#csgB)" stroke="#f01010" stroke-width="1.3"/><rect x="11.350" y="12.750" width="6.400" height="6" fill="#5a98a8" stroke="#234" stroke-width=".8" stroke-dasharray="1.6 1.2"/></g>
<rect x="45.6" y="432.4" width="33" height="33" rx="3.5" fill="url(#lbtn)" stroke="#9c9c9c" stroke-width="1"/><rect x="46.6" y="433.4" width="31" height="31" rx="2.6" fill="none" stroke="#fff" stroke-width="1" opacity=".8"/>
<g transform="translate(45.60 432.40)" ><rect x="4.600" y="14" width="14.300" height="13.800" fill="#000" opacity=".3"/><rect x="12.600" y="6" width="14.200" height="13.900" fill="#000" opacity=".3"/><rect x="3.450" y="12.750" width="14.300" height="13.800" fill="url(#csgT)" stroke="#000" stroke-width="1.3"/><rect x="11.350" y="4.850" width="14.200" height="13.900" fill="url(#csgB)" stroke="#000" stroke-width="1.3"/><path d="M11.350 12.750 V18.750 H17.750" fill="none" stroke="#f01010" stroke-width="1.3"/><path d="M11.350 12.750 H17.750 V18.750" fill="none" stroke="#123" stroke-width=".8" stroke-dasharray="1.600 1.2"/></g>
<rect x="9.6" y="468.4" width="33" height="33" rx="3.5" fill="url(#lbtn)" stroke="#9c9c9c" stroke-width="1"/><rect x="10.6" y="469.4" width="31" height="31" rx="2.6" fill="none" stroke="#fff" stroke-width="1" opacity=".8"/>
<g transform="translate(9.60 468.40)" ><rect x="3.450" y="12.750" width="14.300" height="13.800" fill="url(#csgT)" stroke="#000" stroke-width="1.2" stroke-dasharray="2 1.4"/><rect x="11.350" y="4.850" width="14.200" height="13.900" fill="url(#csgB)" stroke="#000" stroke-width="1.2" stroke-dasharray="2 1.4"/><rect x="11.350" y="12.750" width="6.400" height="6" fill="#2464a4" stroke="#f01010" stroke-width="1.3"/></g>
<rect x="45.6" y="468.4" width="33" height="33" rx="3.5" fill="url(#lbtn)" stroke="#9c9c9c" stroke-width="1"/><rect x="46.6" y="469.4" width="31" height="31" rx="2.6" fill="none" stroke="#fff" stroke-width="1" opacity=".8"/>
<g transform="translate(45.60 468.40)" ><rect x="3.450" y="12.750" width="14.300" height="13.800" fill="url(#csgT)" stroke="#000" stroke-width="1.2" stroke-dasharray="2 1.4"/><rect x="11.350" y="4.850" width="14.200" height="13.900" fill="url(#csgB)" stroke="#f01010" stroke-width="1.3"/><rect x="11.350" y="12.750" width="6.400" height="6" fill="#8cc4b8" stroke="#123" stroke-width=".8" stroke-dasharray="1.6 1.2"/><path d="M11.350 12.750 V18.750 H17.750" fill="none" stroke="#f01010" stroke-width="1.3"/></g>
<rect x="9.6" y="528.2" width="33" height="33" rx="3.5" fill="url(#lbtn)" stroke="#9c9c9c" stroke-width="1"/><rect x="10.6" y="529.2" width="31" height="31" rx="2.6" fill="none" stroke="#fff" stroke-width="1" opacity=".8"/>
<g style="filter:drop-shadow(.9px 1px .5px rgba(0,0,0,.6))"><g transform="translate(9.60 528.20)" ><rect x="5.4" y="6.400" width="23.4" height="22.6" fill="#000"/><rect x="4.400" y="5.400" width="23.4" height="22.6" fill="url(#csgB2)" stroke="#0c1c30" stroke-width="1"/><rect x="9.600" y="10.4" width="13" height="12.6" fill="none" stroke="#000" stroke-width="1.2" stroke-dasharray="2.2 1.6"/></g></g>
<rect x="45.6" y="528.2" width="33" height="33" rx="3.5" fill="url(#lbtn)" stroke="#9c9c9c" stroke-width="1"/><rect x="46.6" y="529.2" width="31" height="31" rx="2.6" fill="none" stroke="#fff" stroke-width="1" opacity=".8"/>
<g style="filter:drop-shadow(.9px 1px .5px rgba(0,0,0,.6))"><g transform="translate(45.60 528.20)" ><path d="M5 11 L15 4.600 L27 9.6 L26.600 21 L18.6 29 L8 22.6Z" fill="#5c8cd0" stroke="#1c2c48" stroke-width="1" stroke-linejoin="round"/><path d="M5 11 L15 4.6 L27 9.6 L17.6 14.600Z" fill="#a4c4f0"/><path d="M5 11 L17.600 14.6 L18.6 29 L8 22.6Z" fill="#6c9cdc"/><path d="M17.6 14.6 L27 9.6 L26.6 21 L18.6 29Z" fill="#3c64a8"/><path d="M15 4.6 L15.600 17.6 L8 22.6 M15.6 17.600 L26.6 21" fill="none" stroke="#c4dcfc" stroke-width=".8" opacity=".8"/><path d="M10.600 22.600 L17 18.600 L22 23.6 L18.6 27Z" fill="#243c64" opacity=".6"/></g></g>
<rect x="9.6" y="588.0" width="33" height="33" rx="3.5" fill="url(#lbtn)" stroke="#9c9c9c" stroke-width="1"/><rect x="10.6" y="589.0" width="31" height="31" rx="2.6" fill="none" stroke="#fff" stroke-width="1" opacity=".8"/>
<g transform="translate(9.60 588.00)" ><rect x="9.800" y="10.600" width="16.400" height="16.400" fill="none" stroke="#e01010" stroke-width="1.9" stroke-dasharray="3.4 1.9"/><path d="M2.600 10 Q12 -1 23.6 8.6 Q14 18 2.6 10Z" fill="#6a807c"/><path d="M5 10 Q12 3.600 21 9 Q13 14.600 5 10Z" fill="#e4ecea"/><circle cx="12.6" cy="9" r="3.2" fill="#20302c"/><circle cx="11.6" cy="8" r=".9" fill="#eee"/><path d="M2.6 10 Q12 -1 23.6 8.6 Q12 2.600 2.6 10Z" fill="#34443f"/></g>
<rect x="45.6" y="588.0" width="33" height="33" rx="3.5" fill="url(#lbtn)" stroke="#9c9c9c" stroke-width="1"/><rect x="46.6" y="589.0" width="31" height="31" rx="2.6" fill="none" stroke="#fff" stroke-width="1" opacity=".8"/>
<g transform="translate(45.60 588.00)" ><rect x="9.800" y="10.600" width="16.400" height="16.400" fill="none" stroke="#e01010" stroke-width="1.9" stroke-dasharray="3.4 1.9"/><path d="M2.600 9.6 Q12 -.6 23.6 8.6 Q14 17 2.6 9.6Z" fill="#5a706c"/><path d="M3.6 9.6 Q13 12.6 22.6 8.800" fill="none" stroke="#1c2c28" stroke-width="1.6"/><path d="M2.6 9.6 Q12 -.6 23.6 8.6 Q12 4 2.6 9.6Z" fill="#44544f"/></g>
<rect x="9.6" y="624.4" width="33" height="33" rx="3.5" fill="url(#lbtn)" stroke="#9c9c9c" stroke-width="1"/><rect x="10.6" y="625.4" width="31" height="31" rx="2.6" fill="none" stroke="#fff" stroke-width="1" opacity=".8"/>
<g transform="translate(9.60 624.40)" ><rect x="5.600" y="7.4" width="22" height="21.6" fill="#000" opacity=".4"/><rect x="4.6" y="6.4" width="22" height="21.6" fill="#142420" stroke="#0a1410" stroke-width="1"/><path d="M4.6 6.4 L26.6 28 H4.6Z" fill="#8cccc0"/><rect x="18.400" y="9.600" width="5" height="5" fill="#3c6c64" stroke="#b4e4dc" stroke-width=".9"/><rect x="8" y="19.600" width="5" height="5" fill="#6cb0a4" stroke="#0a1410" stroke-width=".9"/></g>
<rect x="45.6" y="624.4" width="33" height="33" rx="3.5" fill="url(#lbtn)" stroke="#9c9c9c" stroke-width="1"/><rect x="46.6" y="625.4" width="31" height="31" rx="2.6" fill="none" stroke="#fff" stroke-width="1" opacity=".8"/>
<g transform="translate(45.60 624.40)" ><path d="M3.600 11 Q13 0 24.6 9.600 Q15 19 3.6 11Z" fill="#8a9c98" opacity=".9"/><path d="M6 11 Q13 4.600 22 10 Q14 15.600 6 11Z" fill="#d4dcda"/><circle cx="13.6" cy="10" r="3" fill="#4a5a56"/><path d="M8.600 15 H13.6 L18.6 20 L23.6 15 H28.6 L21 22 L28.6 29 H23.6 L18.6 24 L13.6 29 H8.6 L16.200 22Z" fill="#a8e4dc" stroke="#0c2420" stroke-width="1.1" stroke-linejoin="round"/></g>
<rect x="9.6" y="73.5" width="70" height="17.4" rx="7" fill="#f1f1f1" stroke="#8f8f8f" stroke-width="1"/><path d="M64.8 85.4 h10.2 l-5.1 -5.6Z" fill="#000"/>
<rect x="9.6" y="205.7" width="70" height="17.4" rx="7" fill="#f1f1f1" stroke="#8f8f8f" stroke-width="1"/><path d="M64.8 217.6 h10.2 l-5.1 -5.6Z" fill="#000"/>
<rect x="9.6" y="409.7" width="70" height="17.4" rx="7" fill="#f1f1f1" stroke="#8f8f8f" stroke-width="1"/><path d="M64.8 421.6 h10.2 l-5.1 -5.6Z" fill="#000"/>
<rect x="9.6" y="505.9" width="70" height="17.4" rx="7" fill="#f1f1f1" stroke="#8f8f8f" stroke-width="1"/><path d="M64.8 517.8 h10.2 l-5.1 -5.6Z" fill="#000"/>
<rect x="9.6" y="565.9" width="70" height="17.4" rx="7" fill="#f1f1f1" stroke="#8f8f8f" stroke-width="1"/><path d="M64.8 577.8 h10.2 l-5.1 -5.6Z" fill="#000"/>
</svg>
<svg class="a" style="left:0;top:0" width="1456" height="886" viewBox="0 0 1456 886"><g clip-path="url(#vp)">
<path d="M87 823.500 H111" stroke="#f01010" stroke-width="1.200"/><path d="M89.500 819.500 l6 7 M95.500 819.500 l-6 7" stroke="#f01010" stroke-width="1"/>
<path d="M111 806 V824" stroke="#10e020" stroke-width="1.200"/><path d="M110 806 V822" stroke="#1030ff" stroke-width="1"/>
<path d="M114 802.500 h7 M115 803 l3 4 l3 -4 M118 807 v4" stroke="#10c020" stroke-width="1" fill="none"/><path d="M114 801.500 h8" stroke="#1030ff" stroke-width="1"/><path d="M115 808.500 h6" stroke="#1030ff" stroke-width="1"/>
</g>
<path d="M492.100 675.200 V691.400 L495.800 688 L498.600 694 L501 693 L498.400 687.200 L503.400 686.800Z" fill="#fff" stroke="#000" stroke-width="1"/></svg>
<svg class="a" style="left:0;top:0" width="1456" height="886" viewBox="0 0 1456 886"><defs><linearGradient id="ckg" x1="0" y1="0" x2="1" y2="1"><stop offset="0" stop-color="#d4d5d3"/><stop offset="1" stop-color="#fbfbfb"/></linearGradient></defs>
<rect x="10.500" y="859.5" width="346" height="19" fill="#fff" stroke="#b4b8c4" stroke-width="1"/>
<path d="M344.600 866.8 h7 l-3.500 3.800Z" fill="#000"/>
<rect x="361.4" y="859.1" width="27.6" height="15.6" rx="2.6" fill="url(#lbt)" stroke="#8a8a8a" stroke-width="1"/><rect x="362.4" y="860.1" width="25.6" height="13.6" rx="1.800" fill="none" stroke="#fff" stroke-width="1" opacity=".8"/>
<rect x="393.7" y="859.1" width="27.6" height="15.6" rx="2.6" fill="url(#lbt)" stroke="#8a8a8a" stroke-width="1"/><rect x="394.7" y="860.1" width="25.6" height="13.6" rx="1.800" fill="none" stroke="#fff" stroke-width="1" opacity=".8"/>
<rect x="425.8" y="859.1" width="27.6" height="15.6" rx="2.6" fill="url(#lbt)" stroke="#8a8a8a" stroke-width="1"/><rect x="426.8" y="860.1" width="25.6" height="13.6" rx="1.800" fill="none" stroke="#fff" stroke-width="1" opacity=".8"/>
<path d="M368 864.600 h14 M368 867 h14 M368 869.4 h14" stroke="#111" stroke-width="1.1"/><circle cx="375" cy="864.4" r="1.6" fill="#111"/><path d="M369 861.400 L381 872.600 M381 861.4 L369 872.6" stroke="#e01010" stroke-width="1.7"/>
<g transform="translate(403.80 860.20)" ><path d="M.6 4.600 a3.500 3.500 0 1 1 6.600 0 L5.400 9 h-3Z" fill="url(#bulb)" stroke="#bde" stroke-width=".3"/><rect x="2.400" y="8.800" width="3" height="4.6" fill="#1c3c36"/></g>
<g transform="translate(429.60 860.60)" ><path d="M0 3.600 L6 1 L12 3.600 V10 L6 12.6 L0 10Z" fill="#555" stroke="#222" stroke-width=".8"/><path d="M0 3.600 L6 6 L12 3.6 M6 6 V12.6 M3 2.300 L9 4.800 M9 2.300 L3 4.800 M0 6.800 L6 9.300 L12 6.800 M3 4.8 V11.300 M9 4.800 V11.3" stroke="#ccc" stroke-width=".6" fill="none"/><path d="M10.600 6.600 l2.600 3.400 l5.400 -7.600" fill="none" stroke="#063" stroke-width="3.400"/><path d="M10.600 6.600 l2.600 3.400 l5.400 -7.600" fill="none" stroke="#2ee02e" stroke-width="2"/></g>
<path d="M669.5 859 v17" stroke="#cfcfcf" stroke-width="1"/><path d="M670.5 859 v17" stroke="#fff" stroke-width="1"/>
<path d="M883.5 859 v17" stroke="#cfcfcf" stroke-width="1"/><path d="M884.5 859 v17" stroke="#fff" stroke-width="1"/>
<rect x="887.5" y="858" width="60.0" height="18.400" fill="#fff" stroke="#d4dae8" stroke-width="1.200"/>
<rect x="949.2" y="858" width="60.4" height="18.400" fill="#fff" stroke="#d4dae8" stroke-width="1.200"/>
<rect x="1011.2" y="858" width="60.4" height="18.400" fill="#fff" stroke="#d4dae8" stroke-width="1.200"/>
<rect x="1073.2" y="858" width="60.6" height="18.400" fill="#fff" stroke="#d4dae8" stroke-width="1.200"/>
<path d="M1137.500 860.500 V873.500 H1149" fill="none" stroke="#000" stroke-width="1.100"/><path d="M1140.500 862.500 V872 M1143.500 865.500 V872 M1146.500 868.500 V872 M1139 863.500 h3 M1139 866.500 h6 M1139 869.500 h9" stroke="#000" stroke-width="1" stroke-dasharray="1.200 1"/>
<rect x="1180.0" y="861.5" width="12" height="12" fill="url(#ckg)" stroke="#8e8f8f" stroke-width="1"/><rect x="1182.0" y="863.5" width="8" height="8" fill="none" stroke="#fff" stroke-width="1" opacity=".7"/>
<rect x="1196.1" y="859.7" width="9.5" height="14.5" rx="2.4" fill="url(#lbt)" stroke="#707070" stroke-width="1"/><path d="M1198.3 866.0 h5 l-2.500 3Z" fill="#000"/>
<path d="M1211.6 859 v17" stroke="#cfcfcf" stroke-width="1"/><path d="M1212.6 859 v17" stroke="#fff" stroke-width="1"/>
<path d="M1215 873.500 H1228 M1215.500 873 L1222.500 861.500 M1221 862 Q1226.500 864 1225.500 873" fill="none" stroke="#000" stroke-width="1.200"/><path d="M1219.500 861 h4 v2 h-4Z" fill="#000"/>
<rect x="1257.7" y="861.5" width="12" height="12" fill="url(#ckg)" stroke="#8e8f8f" stroke-width="1"/><rect x="1259.7" y="863.5" width="8" height="8" fill="none" stroke="#fff" stroke-width="1" opacity=".7"/>
<rect x="1273.7" y="859.7" width="9.5" height="14.5" rx="2.4" fill="url(#lbt)" stroke="#707070" stroke-width="1"/><path d="M1276.0 866.0 h5 l-2.500 3Z" fill="#000"/>
<path d="M1291.6 859 v17" stroke="#cfcfcf" stroke-width="1"/><path d="M1292.6 859 v17" stroke="#fff" stroke-width="1"/>
<rect x="1328.7" y="861.5" width="12" height="12" fill="url(#ckg)" stroke="#8e8f8f" stroke-width="1"/><rect x="1330.7" y="863.5" width="8" height="8" fill="none" stroke="#fff" stroke-width="1" opacity=".7"/><path d="M1331.2 867.4 l2.4 3 l4.2 -6.6" fill="none" stroke="#31479d" stroke-width="1.7"/>
<rect x="1344.9" y="859.7" width="9.5" height="14.5" rx="2.4" fill="url(#lbt)" stroke="#707070" stroke-width="1"/><path d="M1347.2 866.0 h5 l-2.500 3Z" fill="#000"/>
<path d="M1362.6 859 v17" stroke="#cfcfcf" stroke-width="1"/><path d="M1363.6 859 v17" stroke="#fff" stroke-width="1"/>
<g transform="translate(1366.60 859.60)" ><rect x=".6" y=".6" width="13.400" height="14" fill="#6e6e40" stroke="#33331a" stroke-width="1"/><rect x="3" y="1" width="8.400" height="5.600" fill="#c8c8c0"/><rect x="3" y="9" width="8.800" height="5.400" fill="#2a2a2a"/><path d="M5.600 9.600 l3 4.200 l6.400 -8.600" fill="none" stroke="#052" stroke-width="3.600"/><path d="M5.600 9.600 l3 4.200 l6.400 -8.600" fill="none" stroke="#18e018" stroke-width="2.100"/></g>
<rect x="1395.1" y="862.5" width="12" height="12" fill="url(#ckg)" stroke="#8e8f8f" stroke-width="1"/><rect x="1397.1" y="864.5" width="8" height="8" fill="none" stroke="#fff" stroke-width="1" opacity=".7"/><path d="M1397.6 868.4 l2.4 3 l4.2 -6.6" fill="none" stroke="#31479d" stroke-width="1.7"/>
<rect x="1412.1" y="861.9" width="9.5" height="14.5" rx="2.4" fill="url(#lbt)" stroke="#707070" stroke-width="1"/><path d="M1414.3 868.1 h5 l-2.500 3Z" fill="#000"/><rect x="171.500" y="880.500" width="154" height="10" rx="3" fill="#6c6c6c" stroke="#9c9c9c" stroke-width="1"/>
<rect x="331.500" y="880.500" width="154" height="10" rx="3" fill="#6c6c6c" stroke="#9c9c9c" stroke-width="1"/>
<rect x="490.500" y="880.500" width="155" height="10" rx="3" fill="#2a2a2a" stroke="#111" stroke-width="1"/>
<rect x="180" y="883" width="9" height="4" fill="#e8d890"/><rect x="340" y="883" width="9" height="4" fill="#e8d890"/>
<circle cx="38" cy="893.500" r="19" fill="#5c6e84" stroke="#c4ccd6" stroke-width="1.600"/><circle cx="38" cy="893.500" r="15.500" fill="#7e90a6"/><path d="M30 884 q5 -2.400 9 0 v2 h-9Z" fill="#e86020"/><path d="M41 884.400 q4 -1.600 8 .6 v1 h-8Z" fill="#50b030"/>
<rect x="124" y="883.600" width="4" height="2.400" fill="#999"/><rect x="152.600" y="883" width="2" height="3" fill="#fff"/><rect x="156.600" y="883" width="2" height="3" fill="#fff"/>
<rect x="1218" y="882" width="10" height="4" fill="none" stroke="#eee" stroke-width="1"/><rect x="1250" y="882.600" width="14" height="4" fill="#4a7ac8"/><rect x="1302" y="883" width="16" height="3" fill="#e02020"/><rect x="1320" y="882" width="15" height="4" fill="#8a1010"/><path d="M1341 886 a7 5 0 0 1 14 0Z" fill="#f4f4f4" stroke="#e03030" stroke-width="1.400"/><rect x="1371" y="883" width="9" height="3" fill="#fff" stroke="#3060c0" stroke-width="1"/><rect x="1270" y="884" width="2" height="2" fill="#ddd"/><circle cx="1290" cy="886" r="3" fill="none" stroke="#ccc"/><path d="M1388 886 l4 -3 v3" fill="#ddd"/></svg>
<!-- Brush Builder dialog -->
<div class="a" style="left:836px;top:217px;width:356px;height:330px;border:1px solid #4a5460;border-radius:7px 7px 2px 2px;background:linear-gradient(#bccde0 0%,#c9d9ea 20px,#d9e5f2 28px,#d6e3f1 100%);box-shadow:0 0 0 0 #000"></div>
<div class="a" style="left:837px;top:218px;width:354px;height:328px;border:1px solid rgba(255,255,255,.55);border-radius:6px 6px 1px 1px"></div>
<!-- close btn -->
<div class="a" style="left:1154px;top:227px;width:28px;height:15px;border:1px solid #6d7f98;border-radius:3px;background:linear-gradient(#dbe6f3 0%,#cddbec 45%,#bccee4 50%,#c8d8ea 100%)"></div>
<svg class="a" style="left:1154px;top:227px" width="28" height="15" viewBox="0 0 28 15"><path d="M9.5 4.2 L12 4.2 L14 6.3 L16 4.2 L18.5 4.2 L15.4 7.5 L18.5 10.8 L16 10.8 L14 8.7 L12 10.8 L9.5 10.8 L12.6 7.5 Z" fill="#fff" stroke="#59647a" stroke-width="1" stroke-linejoin="round"/></svg>
<!-- client -->
<div class="a" style="left:844px;top:245px;width:340px;height:294px;background:#f0f0f0"></div>
<!-- group box -->
<div class="a" style="left:855px;top:261px;width:319px;height:225px;border:1px solid #d5dfe5;border-radius:3px;box-shadow:inset 1px 1px 0 #fff, 1px 1px 0 #fff"></div>
<div class="a" style="left:859.500px;top:256px;width:54px;height:12px;background:#f0f0f0"></div>
<!-- property grid -->
<div class="a" style="left:865px;top:278px;width:281px;height:7px;background:#404040;border-radius:7px 7px 0 0 / 7px 7px 0 0"></div>
<div class="a" style="left:865px;top:418px;width:281px;height:7px;background:#404040;border-radius:0 0 7px 7px / 0 0 7px 7px"></div>
<div class="a" style="left:865px;top:304px;width:281px;height:1px;background:#d0d0d0"></div>
<div class="a" style="left:865px;top:323px;width:281px;height:1px;background:#d0d0d0"></div>
<div class="a" style="left:865px;top:342px;width:281px;height:1px;background:#d0d0d0"></div>
<div class="a" style="left:865px;top:361px;width:281px;height:1px;background:#d0d0d0"></div>
<div class="a" style="left:865px;top:380px;width:281px;height:1px;background:#d0d0d0"></div>
<div class="a" style="left:865px;top:399px;width:281px;height:1px;background:#d0d0d0"></div>
<div class="a" style="left:1051px;top:285px;width:1px;height:133px;background:#d8d8d8"></div>
<div class="a" style="left:1053px;top:383px;width:13px;height:13px;border:1px solid #1e5a8c;background:linear-gradient(135deg,#dcdcd6,#fafafa);box-shadow:inset 0 0 0 1px #f4f4f4"></div>
<div class="a" style="left:1053px;top:402px;width:13px;height:13px;border:1px solid #1e5a8c;background:linear-gradient(135deg,#dcdcd6,#fafafa);box-shadow:inset 0 0 0 1px #f4f4f4"></div>
<!-- spinners -->
<svg class="a" style="left:1136px;top:285px" width="11" height="78" viewBox="0 0 11 78">
<g fill="#000" id="sp"><path d="M1 7 L5.500 2.200 L10 7 Z"/><path d="M1 13 L10 13 L5.500 18.300 Z"/><path d="M1.200 13 Q5.500 9.800 9.800 13" fill="none" stroke="#f0f0f0" stroke-width="1.200"/><path d="M1 12.600 Q5.500 9.600 10 12.600" fill="none" stroke="#000" stroke-width=".7"/></g>
<use href="#sp" y="19"/><use href="#sp" y="38"/><use href="#sp" y="57"/></svg>
<!-- scrollbar -->
<div class="a" style="left:1149px;top:278px;width:14px;height:199px;background:#f0f0f0;border-left:1px solid #e4e4e4"></div>
<div class="a" style="left:1149px;top:295px;width:14px;height:163px;border:1px solid #979797;border-radius:2px;background:linear-gradient(90deg,#f4f4f4 0%,#e9e9eb 45%,#d2d2d6 55%,#cfcfd3 100%)"></div>
<div class="a" style="left:1152px;top:372px;width:7px;height:1px;background:#606060;box-shadow:0 2px 0 #606060,0 4px 0 #606060,0 6px 0 #606060"></div>
<svg class="a" style="left:1149px;top:279px" width="14" height="12"><path d="M3.500 9.200 L7 5 L10.500 9.200Z" fill="#555"/></svg>
<svg class="a" style="left:1149px;top:463px" width="14" height="10"><path d="M3.5 3 L10.5 3 L7 7Z" fill="#333"/></svg>
<!-- buttons -->
<div class="a" style="left:1010px;top:503px;width:73px;height:21px;border:1px solid #3c7fb1;border-radius:3px;background:linear-gradient(#eaf6fd 0%,#d9f0fc 48%,#bee6fd 52%,#a7d9f5 100%);box-shadow:inset 0 0 0 1px #48d2f5"></div>
<div class="a" style="left:1095px;top:503px;width:73px;height:21px;border:1px solid #707070;border-radius:3px;background:linear-gradient(#f2f2f2 0%,#ebebeb 48%,#dddddd 52%,#cfcfcf 100%);box-shadow:inset 0 0 0 1px #fcfcfc"></div>

<!-- red annotations -->
<svg class="a" style="left:0;top:0" width="1456" height="886" viewBox="0 0 1456 886">
<g stroke="#ed1c24" stroke-width="3" fill="none">
<rect x="231.3" y="168.4" width="89.4" height="42"/>
<rect x="330.4" y="168.4" width="88.2" height="42"/>
<rect x="300.5" y="224.5" width="95.2" height="44"/>
<rect x="1049.700" y="285.600" width="99" height="53" stroke-width="2.800"/>
<path d="M231 184.5 L34 248.5" stroke-linecap="round"/>
<path d="M420 190 L1022 513" stroke-linecap="round"/>
<path d="M307 269 L28 445" stroke-linecap="round"/>
</g>
<g fill="#ed1c24">
<!-- 1 -->
<path d="M257.2 173.7 L256.8 183 L255.3 201.6 L245.7 204 L247.7 187 L241 188.4 L241.6 183.6 L254 175.2Z"/>
<!-- 2 -->
<path d="M342.3 181.6 Q346 173 352.5 172.7 Q362 173 362 181 Q361.5 189 352 196 Q357 197.5 363.5 196.200 L359.400 202.800 Q350 202.500 342.400 200.600 Q353 190 353.200 182 Q353 177.500 349.500 177.600 Q346 178 342.300 181.600Z"/>
<!-- 3 -->
<path d="M310.4 231.8 L328.4 232.2 L319.6 243.6 Q327.2 245.2 327.2 252.6 Q327 262.6 316 263.8 L308.4 263.6 Q318.6 260.8 318.4 252.6 Q318.2 247.4 310.6 246.6 L317.2 237.8 L308.6 238.2 Z"/>
</g>
</svg>

<div class="t" style="left:34.60px;top:11.54px;font-size:12.00px;letter-spacing:-0.013px;color:#000;">Untitled - Unreal Development Kit (32-bit)</div>
<div class="t" style="left:15.50px;top:31.80px;font-size:11.70px;letter-spacing:-0.381px;color:#000;">File</div>
<div class="t" style="left:47.40px;top:31.80px;font-size:11.70px;letter-spacing:-0.247px;color:#000;">Edit</div>
<div class="t" style="left:81.00px;top:31.80px;font-size:11.70px;letter-spacing:-0.042px;color:#000;">View</div>
<div class="t" style="left:120.30px;top:31.80px;font-size:11.70px;letter-spacing:-0.337px;color:#000;">Brush</div>
<div class="t" style="left:164.50px;top:31.80px;font-size:11.70px;letter-spacing:0.000px;color:#000;">Build</div>
<div class="t" style="left:205.40px;top:31.80px;font-size:11.70px;letter-spacing:0.263px;color:#000;">Tools</div>
<div class="t" style="left:248.40px;top:31.80px;font-size:11.70px;letter-spacing:0.018px;color:#000;">Help</div>
<div class="t" style="left:848.00px;top:228.90px;font-size:11.70px;letter-spacing:0.026px;color:#3a4664;">Brush Builder - Cube</div>
<div class="t" style="left:862.00px;top:256.87px;font-size:10.90px;letter-spacing:-0.016px;color:#000;">Properties</div>
<div class="t" style="left:883.00px;top:289.69px;font-size:11.00px;letter-spacing:0.000px;color:#000;font-weight:bold;">X</div>
<div class="t" style="left:883.00px;top:308.69px;font-size:11.00px;letter-spacing:0.000px;color:#000;font-weight:bold;">Y</div>
<div class="t" style="left:883.00px;top:327.69px;font-size:11.00px;letter-spacing:0.000px;color:#000;font-weight:bold;">Z</div>
<div class="t" style="left:882.80px;top:346.59px;font-size:11.00px;letter-spacing:-0.374px;color:#000;">Wall Thickness</div>
<div class="t" style="left:882.80px;top:365.49px;font-size:11.00px;letter-spacing:-0.487px;color:#000;">Group Name</div>
<div class="t" style="left:882.80px;top:384.39px;font-size:11.00px;letter-spacing:-0.523px;color:#000;">Hollow</div>
<div class="t" style="left:882.80px;top:403.19px;font-size:11.00px;letter-spacing:-0.155px;color:#000;">Tessellated</div>
<div class="t" style="left:1054.00px;top:287.99px;font-size:11.00px;letter-spacing:-0.193px;color:#000;">1024.000000</div>
<div class="t" style="left:1054.00px;top:306.99px;font-size:11.00px;letter-spacing:-0.193px;color:#000;">1024.000000</div>
<div class="t" style="left:1053.80px;top:325.89px;font-size:11.00px;letter-spacing:-0.200px;color:#000;">36.000000</div>
<div class="t" style="left:1053.80px;top:344.89px;font-size:11.00px;letter-spacing:-0.200px;color:#000;">16.000000</div>
<div class="t" style="left:1052.80px;top:363.79px;font-size:11.00px;letter-spacing:-0.566px;color:#000;">Cube</div>
<div class="t" style="left:1034.30px;top:508.12px;font-size:11.20px;letter-spacing:-0.723px;color:#000;">Build</div>
<div class="t" style="left:1117.40px;top:508.12px;font-size:11.20px;letter-spacing:-0.727px;color:#000;">Close</div>
<div class="t" style="left:460.40px;top:861.94px;font-size:12.00px;letter-spacing:-0.265px;color:#000;">Current Level:&nbsp; Persistent Level</div>
<div class="t" style="left:889.70px;top:860.64px;font-size:12.00px;letter-spacing:-1.529px;color:#000;">None</div>
<div class="t" style="left:951.50px;top:860.64px;font-size:12.00px;letter-spacing:-1.529px;color:#000;">None</div>
<div class="t" style="left:1013.50px;top:860.64px;font-size:12.00px;letter-spacing:-1.529px;color:#000;">None</div>
<div class="t" style="left:1075.50px;top:860.64px;font-size:12.00px;letter-spacing:-1.529px;color:#000;">None</div>
<div class="t" style="left:1152.00px;top:860.84px;font-size:12.00px;letter-spacing:-0.859px;color:#000;">32</div>
<div class="t" style="left:1230.00px;top:860.84px;font-size:12.00px;letter-spacing:-0.688px;color:#000;">~6</div>
<div class="t" style="left:1295.00px;top:860.84px;font-size:12.00px;letter-spacing:-0.344px;color:#000;">5%</div>
</body></html>
